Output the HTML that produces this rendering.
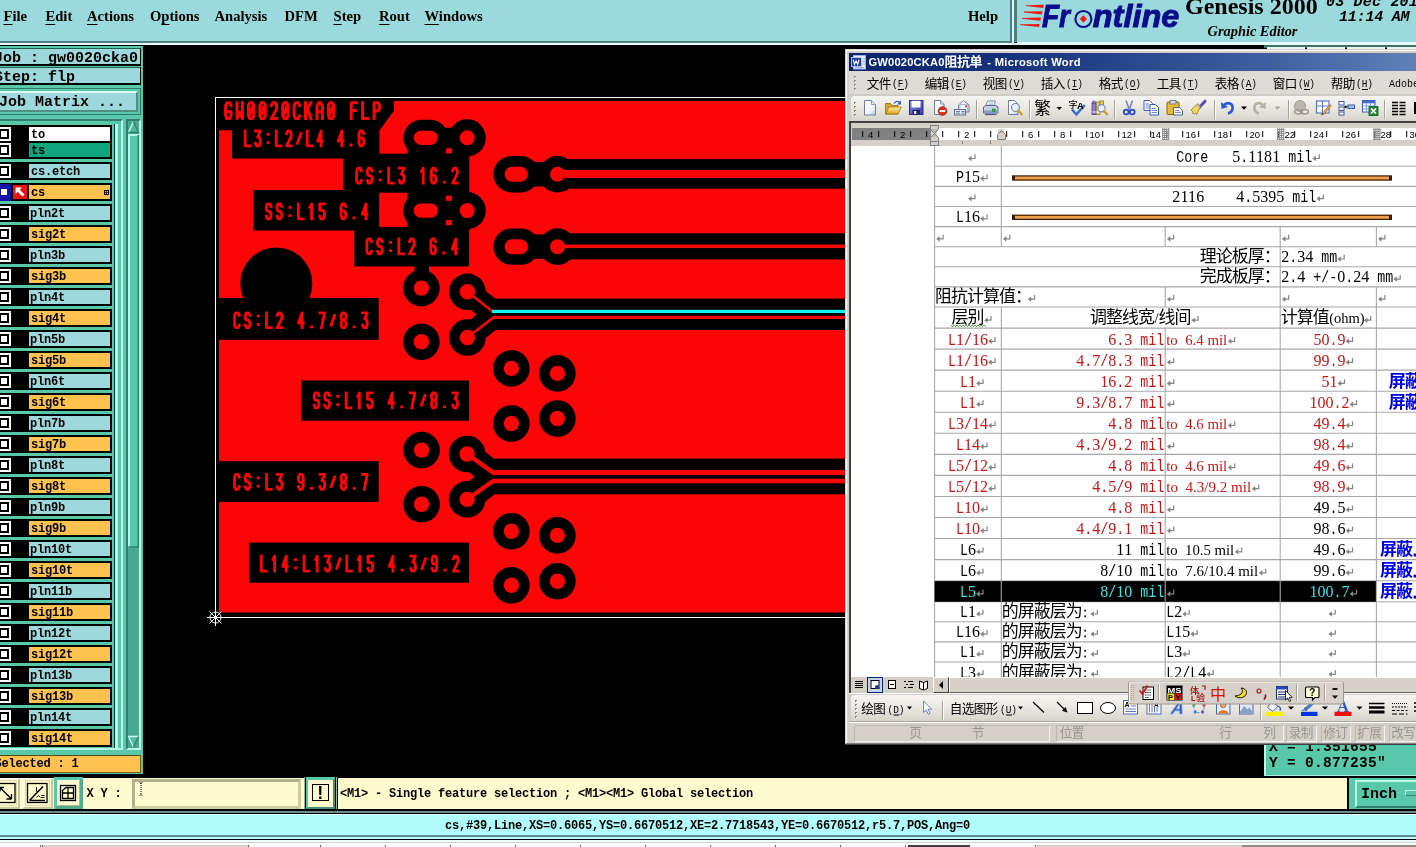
<!DOCTYPE html>
<html><head><meta charset="utf-8"><title>Genesis 2000 Graphic Editor</title>
<style>
html,body{margin:0;padding:0;}
body{width:1416px;height:847px;background:#000;position:relative;overflow:hidden;font-family:"Liberation Sans",sans-serif;}
div{position:absolute;box-sizing:border-box;}
.t{white-space:pre;}
svg{position:absolute;overflow:visible;}
</style></head><body>
<div id="root" style="left:0;top:0;width:1416px;height:847px;overflow:hidden;will-change:transform">
<div style="left:0px;top:0px;width:1010px;height:41px;background:#9bdadc;"></div>
<div style="left:0px;top:41px;width:1012px;height:2px;background:#4f7f7e;"></div>
<div style="left:0px;top:43px;width:1416px;height:2px;background:#e6fbfb;"></div>
<div style="left:1010px;top:0px;width:2px;height:43px;background:#4f7f7e;"></div>
<div style="left:1012px;top:0px;width:2px;height:45px;background:#d8f6f6;"></div>
<div style="left:1014px;top:0px;width:3px;height:42px;background:#4f7f7e;"></div>
<div style="left:1017px;top:0px;width:399px;height:42.3px;background:#9bdadc;"></div>
<div style="left:1017px;top:42.3px;width:399px;height:3px;background:#e6fbfb;"></div>
<div class="t" style="left:3.5px;top:7px;font:bold 14.6px/18px 'Liberation Serif',serif;color:#000;text-underline-offset:2.5px"><u>F</u>ile</div>
<div class="t" style="left:45.5px;top:7px;font:bold 14.6px/18px 'Liberation Serif',serif;color:#000;text-underline-offset:2.5px"><u>E</u>dit</div>
<div class="t" style="left:87px;top:7px;font:bold 14.6px/18px 'Liberation Serif',serif;color:#000;text-underline-offset:2.5px"><u>A</u>ctions</div>
<div class="t" style="left:150px;top:7px;font:bold 14.6px/18px 'Liberation Serif',serif;color:#000;text-underline-offset:2.5px">O<u>p</u>tions</div>
<div class="t" style="left:214.5px;top:7px;font:bold 14.6px/18px 'Liberation Serif',serif;color:#000;text-underline-offset:2.5px">Analysis</div>
<div class="t" style="left:284.5px;top:7px;font:bold 14.6px/18px 'Liberation Serif',serif;color:#000;text-underline-offset:2.5px">DFM</div>
<div class="t" style="left:333.5px;top:7px;font:bold 14.6px/18px 'Liberation Serif',serif;color:#000;text-underline-offset:2.5px"><u>S</u>tep</div>
<div class="t" style="left:379px;top:7px;font:bold 14.6px/18px 'Liberation Serif',serif;color:#000;text-underline-offset:2.5px"><u>R</u>out</div>
<div class="t" style="left:424.5px;top:7px;font:bold 14.6px/18px 'Liberation Serif',serif;color:#000;text-underline-offset:2.5px"><u>W</u>indows</div>
<div class="t" style="left:968px;top:7px;font:bold 14.6px/18px 'Liberation Serif',serif;color:#000;text-underline-offset:2.5px">Help</div>
<svg style="left:1017px;top:0" width="170" height="42" viewBox="0 0 170 42">
<g fill="#f01818">
<polygon points="9,5.2 27,4.8 26.3,8 9,6"/>
<polygon points="7,11.6 25.5,11.2 24.8,14.4 7,12.4"/>
<polygon points="5,18 24,17.6 23.3,20.8 5,18.8"/>
<polygon points="3,24.3 22.5,23.9 21.8,27.1 3,25.1"/>
</g>
<g style="font:italic bold 30.5px 'Liberation Sans',sans-serif" fill="#0c0c8c" stroke="#0c0c8c" stroke-width="0.9">
<text x="25" y="27.2" textLength="28" lengthAdjust="spacingAndGlyphs">Fr</text>
<text x="75.8" y="27.2" textLength="86.5" lengthAdjust="spacingAndGlyphs">ntline</text>
</g>
<circle cx="66.4" cy="19" r="8" fill="none" stroke="#0c0c8c" stroke-width="2.1"/>
<polygon points="66.4,15.2 70,19 66.4,22.8 62.800,19" fill="#f01818"/>
</svg>
<div class="t" style="left:1185px;top:-6.4px;font:bold 24px/24px 'Liberation Serif',sans-serif;color:#000;">Genesis 2000</div>
<div class="t" style="left:1207.5px;top:22px;font:italic bold 14.4px/18px 'Liberation Serif',serif;color:#000">Graphic Editor</div>
<div class="t" style="left:1326px;top:-5.2px;font:italic bold 15px/16px 'Liberation Mono',monospace;color:#000;letter-spacing:0.2px">03 Dec 2013</div>
<div class="t" style="left:1339px;top:10.4px;font:italic bold 15px/16px 'Liberation Mono',monospace;color:#000;letter-spacing:-0.2px">11:14 AM</div>
<div style="left:1264px;top:45px;width:152px;height:3px;background:#3d7466;"></div>
<div style="left:1267px;top:47px;width:38px;height:2px;background:#e8f4f0;"></div>
<div style="left:1307px;top:47px;width:38px;height:2px;background:#e8f4f0;"></div>
<div style="left:1347px;top:47px;width:38px;height:2px;background:#e8f4f0;"></div>
<div style="left:1387px;top:47px;width:38px;height:2px;background:#e8f4f0;"></div>
<div style="left:0px;top:45px;width:143px;height:732px;background:#58c8a8;"></div>
<div style="left:0px;top:45px;width:143px;height:1px;background:#000;"></div>
<div style="left:-2px;top:48px;width:143px;height:18px;background:#9dd9dc;border:1px solid #1f5f50;border-bottom:2px solid #000;border-right:1px solid #000"></div>
<div class="t" style="left:-6px;top:50.5px;font:bold 15px/16px 'Liberation Mono',sans-serif;color:#000;">Job : gw0020cka0</div>
<div style="left:-2px;top:67px;width:143px;height:18px;background:#9dd9dc;border:1px solid #1f5f50;border-bottom:2px solid #000;border-right:1px solid #000"></div>
<div class="t" style="left:-6px;top:69.5px;font:bold 15px/16px 'Liberation Mono',sans-serif;color:#000;">Step: flp</div>
<div style="left:-2px;top:88px;width:143px;height:27px;background:#58c8a8;border:1px solid #2c7a68"></div>
<div style="left:-2px;top:91px;width:140px;height:21px;background:#9dd9dc;border-top:2px solid #d8fbf6;border-left:2px solid #d8fbf6;border-bottom:2px solid #4f8f86;border-right:2px solid #4f8f86"></div>
<div class="t" style="left:-1px;top:95px;font:bold 15px/16px 'Liberation Mono',sans-serif;color:#000;">Job Matrix ...</div>
<div style="left:-2px;top:119px;width:125px;height:631px;background:#58c8a8;border-top:2px solid #2f7f6c;border-right:2px solid #b8f6e6;border-bottom:2px solid #b8f6e6"></div>
<div style="left:114.2px;top:124px;width:0.9px;height:624px;background:#103830;"></div>
<div style="left:115px;top:124px;width:3px;height:624px;background:#b8f6e6;"></div>
<div style="left:126px;top:119px;width:15px;height:631px;background:#4fb39a;border-left:2px solid #2f7f6c;border-top:2px solid #2f7f6c;border-right:2px solid #b8f6e6;border-bottom:2px solid #b8f6e6"></div>
<svg style="left:126px;top:119px" width="15" height="631"><rect x="2" y="2" width="11" height="627" fill="#48a891"/><polygon points="7.5,2.5 2.5,13.5 12.5,13.5" fill="#55b89e"/><polyline points="2.5,13.5 7.5,2.5" fill="none" stroke="#c8fff0" stroke-width="1.3"/><polyline points="7.5,2.5 12.5,13.5 2.5,13.5" fill="none" stroke="#2f7f6c" stroke-width="1.3"/><rect x="2" y="15" width="11" height="413.500" fill="#58c8a8"/><path d="M3,428.500V16H13" fill="none" stroke="#b8f6e6" stroke-width="2"/><path d="M12.250,16V428H2.500" fill="none" stroke="#2f7f6c" stroke-width="1.500"/><polygon points="7.5,628 2.5,617.5 12.5,617.5" fill="#55b89e"/><polyline points="7.5,628 2.5,617.5 12.5,617.5" fill="none" stroke="#c8fff0" stroke-width="1.3"/><polyline points="12.5,617.5 7.5,628" fill="none" stroke="#2f7f6c" stroke-width="1.3"/></svg>
<div style="left:0px;top:125px;width:112px;height:34px;background:#000;"></div>
<div style="left:29px;top:126.5px;width:81px;height:14.5px;background:#fff;"></div>
<div class="t" style="left:31px;top:128px;font:bold 12px/14px 'Liberation Mono',sans-serif;color:#000;letter-spacing:-0.2px">to</div>
<div style="left:29px;top:143px;width:81px;height:14px;background:#0fa57d;"></div>
<div class="t" style="left:31px;top:144px;font:bold 12px/14px 'Liberation Mono',sans-serif;color:#000;letter-spacing:-0.2px">ts</div>
<div style="left:-3px;top:127px;width:14px;height:14px;background:#fff;"></div>
<div style="left:-1px;top:129px;width:10px;height:10px;background:#000;"></div>
<div style="left:1px;top:131px;width:6px;height:6px;background:#fff;"></div>
<div style="left:-3px;top:143px;width:14px;height:14px;background:#fff;"></div>
<div style="left:-1px;top:145px;width:10px;height:10px;background:#000;"></div>
<div style="left:1px;top:147px;width:6px;height:6px;background:#fff;"></div>
<div style="left:0px;top:162px;width:112px;height:18px;background:#000;"></div>
<div style="left:29px;top:164px;width:81px;height:14px;background:#9dd9dc;"></div>
<div class="t" style="left:31px;top:165px;font:bold 12px/14px 'Liberation Mono',sans-serif;color:#000;letter-spacing:-0.2px">cs.etch</div>
<div style="left:-3px;top:164px;width:14px;height:14px;background:#fff;"></div>
<div style="left:-1px;top:166px;width:10px;height:10px;background:#000;"></div>
<div style="left:1px;top:168px;width:6px;height:6px;background:#fff;"></div>
<div style="left:0px;top:183px;width:112px;height:18px;background:#000;"></div>
<div style="left:29px;top:185px;width:81px;height:14px;background:#ffc24f;"></div>
<div class="t" style="left:31px;top:186px;font:bold 12px/14px 'Liberation Mono',sans-serif;color:#000;letter-spacing:-0.2px">cs</div>
<div style="left:0px;top:184px;width:11px;height:17px;background:#1414a0;"></div>
<div style="left:1px;top:189px;width:6px;height:6px;background:#fff;"></div>
<div style="left:13px;top:185px;width:14px;height:14px;background:#f01010;"></div>
<svg style="left:13px;top:185px" width="14" height="14"><polygon points="2.5,2.5 9,2.5 6.8,4.7 11.5,9.4 9.4,11.5 4.7,6.8 2.5,9" fill="#fff"/></svg>
<div style="left:0px;top:204px;width:112px;height:18px;background:#000;"></div>
<div style="left:29px;top:206px;width:81px;height:14px;background:#9dd9dc;"></div>
<div class="t" style="left:30px;top:207px;font:bold 12px/14px 'Liberation Mono',sans-serif;color:#000;letter-spacing:-0.2px">pln2t</div>
<div style="left:-3px;top:206px;width:14px;height:14px;background:#fff;"></div>
<div style="left:-1px;top:208px;width:10px;height:10px;background:#000;"></div>
<div style="left:1px;top:210px;width:6px;height:6px;background:#fff;"></div>
<div style="left:0px;top:225px;width:112px;height:18px;background:#000;"></div>
<div style="left:29px;top:227px;width:81px;height:14px;background:#ffc24f;"></div>
<div class="t" style="left:31px;top:228px;font:bold 12px/14px 'Liberation Mono',sans-serif;color:#000;letter-spacing:-0.2px">sig2t</div>
<div style="left:-3px;top:227px;width:14px;height:14px;background:#fff;"></div>
<div style="left:-1px;top:229px;width:10px;height:10px;background:#000;"></div>
<div style="left:1px;top:231px;width:6px;height:6px;background:#fff;"></div>
<div style="left:0px;top:246px;width:112px;height:18px;background:#000;"></div>
<div style="left:29px;top:248px;width:81px;height:14px;background:#9dd9dc;"></div>
<div class="t" style="left:30px;top:249px;font:bold 12px/14px 'Liberation Mono',sans-serif;color:#000;letter-spacing:-0.2px">pln3b</div>
<div style="left:-3px;top:248px;width:14px;height:14px;background:#fff;"></div>
<div style="left:-1px;top:250px;width:10px;height:10px;background:#000;"></div>
<div style="left:1px;top:252px;width:6px;height:6px;background:#fff;"></div>
<div style="left:0px;top:267px;width:112px;height:18px;background:#000;"></div>
<div style="left:29px;top:269px;width:81px;height:14px;background:#ffc24f;"></div>
<div class="t" style="left:31px;top:270px;font:bold 12px/14px 'Liberation Mono',sans-serif;color:#000;letter-spacing:-0.2px">sig3b</div>
<div style="left:-3px;top:269px;width:14px;height:14px;background:#fff;"></div>
<div style="left:-1px;top:271px;width:10px;height:10px;background:#000;"></div>
<div style="left:1px;top:273px;width:6px;height:6px;background:#fff;"></div>
<div style="left:0px;top:288px;width:112px;height:18px;background:#000;"></div>
<div style="left:29px;top:290px;width:81px;height:14px;background:#9dd9dc;"></div>
<div class="t" style="left:30px;top:291px;font:bold 12px/14px 'Liberation Mono',sans-serif;color:#000;letter-spacing:-0.2px">pln4t</div>
<div style="left:-3px;top:290px;width:14px;height:14px;background:#fff;"></div>
<div style="left:-1px;top:292px;width:10px;height:10px;background:#000;"></div>
<div style="left:1px;top:294px;width:6px;height:6px;background:#fff;"></div>
<div style="left:0px;top:309px;width:112px;height:18px;background:#000;"></div>
<div style="left:29px;top:311px;width:81px;height:14px;background:#ffc24f;"></div>
<div class="t" style="left:31px;top:312px;font:bold 12px/14px 'Liberation Mono',sans-serif;color:#000;letter-spacing:-0.2px">sig4t</div>
<div style="left:-3px;top:311px;width:14px;height:14px;background:#fff;"></div>
<div style="left:-1px;top:313px;width:10px;height:10px;background:#000;"></div>
<div style="left:1px;top:315px;width:6px;height:6px;background:#fff;"></div>
<div style="left:0px;top:330px;width:112px;height:18px;background:#000;"></div>
<div style="left:29px;top:332px;width:81px;height:14px;background:#9dd9dc;"></div>
<div class="t" style="left:30px;top:333px;font:bold 12px/14px 'Liberation Mono',sans-serif;color:#000;letter-spacing:-0.2px">pln5b</div>
<div style="left:-3px;top:332px;width:14px;height:14px;background:#fff;"></div>
<div style="left:-1px;top:334px;width:10px;height:10px;background:#000;"></div>
<div style="left:1px;top:336px;width:6px;height:6px;background:#fff;"></div>
<div style="left:0px;top:351px;width:112px;height:18px;background:#000;"></div>
<div style="left:29px;top:353px;width:81px;height:14px;background:#ffc24f;"></div>
<div class="t" style="left:31px;top:354px;font:bold 12px/14px 'Liberation Mono',sans-serif;color:#000;letter-spacing:-0.2px">sig5b</div>
<div style="left:-3px;top:353px;width:14px;height:14px;background:#fff;"></div>
<div style="left:-1px;top:355px;width:10px;height:10px;background:#000;"></div>
<div style="left:1px;top:357px;width:6px;height:6px;background:#fff;"></div>
<div style="left:0px;top:372px;width:112px;height:18px;background:#000;"></div>
<div style="left:29px;top:374px;width:81px;height:14px;background:#9dd9dc;"></div>
<div class="t" style="left:30px;top:375px;font:bold 12px/14px 'Liberation Mono',sans-serif;color:#000;letter-spacing:-0.2px">pln6t</div>
<div style="left:-3px;top:374px;width:14px;height:14px;background:#fff;"></div>
<div style="left:-1px;top:376px;width:10px;height:10px;background:#000;"></div>
<div style="left:1px;top:378px;width:6px;height:6px;background:#fff;"></div>
<div style="left:0px;top:393px;width:112px;height:18px;background:#000;"></div>
<div style="left:29px;top:395px;width:81px;height:14px;background:#ffc24f;"></div>
<div class="t" style="left:31px;top:396px;font:bold 12px/14px 'Liberation Mono',sans-serif;color:#000;letter-spacing:-0.2px">sig6t</div>
<div style="left:-3px;top:395px;width:14px;height:14px;background:#fff;"></div>
<div style="left:-1px;top:397px;width:10px;height:10px;background:#000;"></div>
<div style="left:1px;top:399px;width:6px;height:6px;background:#fff;"></div>
<div style="left:0px;top:414px;width:112px;height:18px;background:#000;"></div>
<div style="left:29px;top:416px;width:81px;height:14px;background:#9dd9dc;"></div>
<div class="t" style="left:30px;top:417px;font:bold 12px/14px 'Liberation Mono',sans-serif;color:#000;letter-spacing:-0.2px">pln7b</div>
<div style="left:-3px;top:416px;width:14px;height:14px;background:#fff;"></div>
<div style="left:-1px;top:418px;width:10px;height:10px;background:#000;"></div>
<div style="left:1px;top:420px;width:6px;height:6px;background:#fff;"></div>
<div style="left:0px;top:435px;width:112px;height:18px;background:#000;"></div>
<div style="left:29px;top:437px;width:81px;height:14px;background:#ffc24f;"></div>
<div class="t" style="left:31px;top:438px;font:bold 12px/14px 'Liberation Mono',sans-serif;color:#000;letter-spacing:-0.2px">sig7b</div>
<div style="left:-3px;top:437px;width:14px;height:14px;background:#fff;"></div>
<div style="left:-1px;top:439px;width:10px;height:10px;background:#000;"></div>
<div style="left:1px;top:441px;width:6px;height:6px;background:#fff;"></div>
<div style="left:0px;top:456px;width:112px;height:18px;background:#000;"></div>
<div style="left:29px;top:458px;width:81px;height:14px;background:#9dd9dc;"></div>
<div class="t" style="left:30px;top:459px;font:bold 12px/14px 'Liberation Mono',sans-serif;color:#000;letter-spacing:-0.2px">pln8t</div>
<div style="left:-3px;top:458px;width:14px;height:14px;background:#fff;"></div>
<div style="left:-1px;top:460px;width:10px;height:10px;background:#000;"></div>
<div style="left:1px;top:462px;width:6px;height:6px;background:#fff;"></div>
<div style="left:0px;top:477px;width:112px;height:18px;background:#000;"></div>
<div style="left:29px;top:479px;width:81px;height:14px;background:#ffc24f;"></div>
<div class="t" style="left:31px;top:480px;font:bold 12px/14px 'Liberation Mono',sans-serif;color:#000;letter-spacing:-0.2px">sig8t</div>
<div style="left:-3px;top:479px;width:14px;height:14px;background:#fff;"></div>
<div style="left:-1px;top:481px;width:10px;height:10px;background:#000;"></div>
<div style="left:1px;top:483px;width:6px;height:6px;background:#fff;"></div>
<div style="left:0px;top:498px;width:112px;height:18px;background:#000;"></div>
<div style="left:29px;top:500px;width:81px;height:14px;background:#9dd9dc;"></div>
<div class="t" style="left:30px;top:501px;font:bold 12px/14px 'Liberation Mono',sans-serif;color:#000;letter-spacing:-0.2px">pln9b</div>
<div style="left:-3px;top:500px;width:14px;height:14px;background:#fff;"></div>
<div style="left:-1px;top:502px;width:10px;height:10px;background:#000;"></div>
<div style="left:1px;top:504px;width:6px;height:6px;background:#fff;"></div>
<div style="left:0px;top:519px;width:112px;height:18px;background:#000;"></div>
<div style="left:29px;top:521px;width:81px;height:14px;background:#ffc24f;"></div>
<div class="t" style="left:31px;top:522px;font:bold 12px/14px 'Liberation Mono',sans-serif;color:#000;letter-spacing:-0.2px">sig9b</div>
<div style="left:-3px;top:521px;width:14px;height:14px;background:#fff;"></div>
<div style="left:-1px;top:523px;width:10px;height:10px;background:#000;"></div>
<div style="left:1px;top:525px;width:6px;height:6px;background:#fff;"></div>
<div style="left:0px;top:540px;width:112px;height:18px;background:#000;"></div>
<div style="left:29px;top:542px;width:81px;height:14px;background:#9dd9dc;"></div>
<div class="t" style="left:30px;top:543px;font:bold 12px/14px 'Liberation Mono',sans-serif;color:#000;letter-spacing:-0.2px">pln10t</div>
<div style="left:-3px;top:542px;width:14px;height:14px;background:#fff;"></div>
<div style="left:-1px;top:544px;width:10px;height:10px;background:#000;"></div>
<div style="left:1px;top:546px;width:6px;height:6px;background:#fff;"></div>
<div style="left:0px;top:561px;width:112px;height:18px;background:#000;"></div>
<div style="left:29px;top:563px;width:81px;height:14px;background:#ffc24f;"></div>
<div class="t" style="left:31px;top:564px;font:bold 12px/14px 'Liberation Mono',sans-serif;color:#000;letter-spacing:-0.2px">sig10t</div>
<div style="left:-3px;top:563px;width:14px;height:14px;background:#fff;"></div>
<div style="left:-1px;top:565px;width:10px;height:10px;background:#000;"></div>
<div style="left:1px;top:567px;width:6px;height:6px;background:#fff;"></div>
<div style="left:0px;top:582px;width:112px;height:18px;background:#000;"></div>
<div style="left:29px;top:584px;width:81px;height:14px;background:#9dd9dc;"></div>
<div class="t" style="left:30px;top:585px;font:bold 12px/14px 'Liberation Mono',sans-serif;color:#000;letter-spacing:-0.2px">pln11b</div>
<div style="left:-3px;top:584px;width:14px;height:14px;background:#fff;"></div>
<div style="left:-1px;top:586px;width:10px;height:10px;background:#000;"></div>
<div style="left:1px;top:588px;width:6px;height:6px;background:#fff;"></div>
<div style="left:0px;top:603px;width:112px;height:18px;background:#000;"></div>
<div style="left:29px;top:605px;width:81px;height:14px;background:#ffc24f;"></div>
<div class="t" style="left:31px;top:606px;font:bold 12px/14px 'Liberation Mono',sans-serif;color:#000;letter-spacing:-0.2px">sig11b</div>
<div style="left:-3px;top:605px;width:14px;height:14px;background:#fff;"></div>
<div style="left:-1px;top:607px;width:10px;height:10px;background:#000;"></div>
<div style="left:1px;top:609px;width:6px;height:6px;background:#fff;"></div>
<div style="left:0px;top:624px;width:112px;height:18px;background:#000;"></div>
<div style="left:29px;top:626px;width:81px;height:14px;background:#9dd9dc;"></div>
<div class="t" style="left:30px;top:627px;font:bold 12px/14px 'Liberation Mono',sans-serif;color:#000;letter-spacing:-0.2px">pln12t</div>
<div style="left:-3px;top:626px;width:14px;height:14px;background:#fff;"></div>
<div style="left:-1px;top:628px;width:10px;height:10px;background:#000;"></div>
<div style="left:1px;top:630px;width:6px;height:6px;background:#fff;"></div>
<div style="left:0px;top:645px;width:112px;height:18px;background:#000;"></div>
<div style="left:29px;top:647px;width:81px;height:14px;background:#ffc24f;"></div>
<div class="t" style="left:31px;top:648px;font:bold 12px/14px 'Liberation Mono',sans-serif;color:#000;letter-spacing:-0.2px">sig12t</div>
<div style="left:-3px;top:647px;width:14px;height:14px;background:#fff;"></div>
<div style="left:-1px;top:649px;width:10px;height:10px;background:#000;"></div>
<div style="left:1px;top:651px;width:6px;height:6px;background:#fff;"></div>
<div style="left:0px;top:666px;width:112px;height:18px;background:#000;"></div>
<div style="left:29px;top:668px;width:81px;height:14px;background:#9dd9dc;"></div>
<div class="t" style="left:30px;top:669px;font:bold 12px/14px 'Liberation Mono',sans-serif;color:#000;letter-spacing:-0.2px">pln13b</div>
<div style="left:-3px;top:668px;width:14px;height:14px;background:#fff;"></div>
<div style="left:-1px;top:670px;width:10px;height:10px;background:#000;"></div>
<div style="left:1px;top:672px;width:6px;height:6px;background:#fff;"></div>
<div style="left:0px;top:687px;width:112px;height:18px;background:#000;"></div>
<div style="left:29px;top:689px;width:81px;height:14px;background:#ffc24f;"></div>
<div class="t" style="left:31px;top:690px;font:bold 12px/14px 'Liberation Mono',sans-serif;color:#000;letter-spacing:-0.2px">sig13b</div>
<div style="left:-3px;top:689px;width:14px;height:14px;background:#fff;"></div>
<div style="left:-1px;top:691px;width:10px;height:10px;background:#000;"></div>
<div style="left:1px;top:693px;width:6px;height:6px;background:#fff;"></div>
<div style="left:0px;top:708px;width:112px;height:18px;background:#000;"></div>
<div style="left:29px;top:710px;width:81px;height:14px;background:#9dd9dc;"></div>
<div class="t" style="left:30px;top:711px;font:bold 12px/14px 'Liberation Mono',sans-serif;color:#000;letter-spacing:-0.2px">pln14t</div>
<div style="left:-3px;top:710px;width:14px;height:14px;background:#fff;"></div>
<div style="left:-1px;top:712px;width:10px;height:10px;background:#000;"></div>
<div style="left:1px;top:714px;width:6px;height:6px;background:#fff;"></div>
<div style="left:0px;top:729px;width:112px;height:18px;background:#000;"></div>
<div style="left:29px;top:731px;width:81px;height:14px;background:#ffc24f;"></div>
<div class="t" style="left:31px;top:732px;font:bold 12px/14px 'Liberation Mono',sans-serif;color:#000;letter-spacing:-0.2px">sig14t</div>
<div style="left:-3px;top:731px;width:14px;height:14px;background:#fff;"></div>
<div style="left:-1px;top:733px;width:10px;height:10px;background:#000;"></div>
<div style="left:1px;top:735px;width:6px;height:6px;background:#fff;"></div>
<svg style="left:104px;top:190px" width="6" height="6"><rect x="0" y="0" width="5" height="5" fill="#000"/><rect x="1" y="1" width="1.2" height="1.2" fill="#ffc24f"/><rect x="2.900" y="1" width="1.2" height="1.2" fill="#ffc24f"/><rect x="1" y="2.900" width="1.2" height="1.2" fill="#ffc24f"/><rect x="2.900" y="2.900" width="1.2" height="1.2" fill="#ffc24f"/></svg>
<div style="left:-2px;top:754.5px;width:143px;height:18px;background:#ffc24f;border:1px solid #7a5a10;border-top-color:#5a4a20"></div>
<div class="t" style="left:-5.5px;top:756px;font:bold 12px/16px 'Liberation Mono',sans-serif;color:#000;letter-spacing:-0.2px">Selected : 1</div>
<div style="left:0px;top:777.5px;width:1416px;height:32px;background:#fffbce;"></div>
<div style="left:0px;top:774px;width:143px;height:3px;background:#000;"></div>
<div style="left:-3px;top:777.5px;width:23px;height:31px;background:#fffbce;border:2px solid #fffde8;border-bottom-color:#c8c49c;border-right-color:#c8c49c"></div>
<div style="left:-3px;top:780px;width:20px;height:26px;background:#fffbce;border:1px solid #dedab4"></div>
<div style="left:22px;top:777.5px;width:30.5px;height:31px;background:#fffbce;border:2px solid #fffde8;border-bottom-color:#c8c49c;border-right-color:#c8c49c"></div>
<div style="left:24.5px;top:780px;width:25.5px;height:26px;background:#fffbce;border:1px solid #dedab4"></div>
<div style="left:54px;top:777px;width:28.5px;height:32px;background:#fffbce;border:3px solid #58c8a8;border-bottom-color:#4fae94;border-right-color:#4fae94"></div>
<div style="left:57px;top:780px;width:22.5px;height:26px;background:#fffbce;border:1.5px solid #fffde8;border-bottom-color:#b8b48c;border-right-color:#b8b48c"></div>
<svg style="left:0;top:777px" width="90" height="34" fill="none" stroke="#000" stroke-width="1.3">
<rect x="-4" y="6.500" width="19" height="19"/><path d="M0.500,11L11,21.500M11.500,22V17M11.500,22H6.500M0,10.500h4M0,10.500v4"/>
<rect x="27.500" y="6.500" width="19.500" height="19"/><path d="M29.500,23.500H45M29.500,23.500L43,9.500" stroke-width="1.500"/><path d="M36.500,10v4.500h2.500M36.500,20.500l2,-2 2,2M41,18.500h3.500M41,20.500h3.500" stroke-width="0.900"/>
<rect x="60.500" y="8.500" width="15" height="15"/><path d="M62.500,21.500V13.500L66,10.500H73.500V21.500ZM62.500,16H73.500M68,10.500V21.500"/>
</svg>
<div class="t" style="left:86.5px;top:786px;font:bold 12px/16px 'Liberation Mono',sans-serif;color:#000;letter-spacing:-0.2px">X Y :</div>
<div style="left:132px;top:778.5px;width:169px;height:30px;background:#fffbce;border:3px solid #cfcba2;border-top-color:#b4b08a;border-left-color:#b4b08a"></div>
<svg style="left:138px;top:781px" width="6" height="18"><path d="M3 2V14" stroke="#000" stroke-dasharray="1 1"/><path d="M1.5 1l1.5 1.5L4.5 1M1.5 15l1.5-1.5L4.5 15" stroke="#000" fill="none" stroke-width="0.8"/></svg>
<div style="left:305px;top:777px;width:31px;height:33px;background:#fffbce;border:3px solid #58c8a8;border-bottom-color:#3f8f7c;border-right-color:#3f8f7c"></div>
<div style="left:312px;top:784.4px;width:16.5px;height:16.5px;background:#fffbce;border:1.500px solid #000"></div>
<div class="t" style="left:317.3px;top:783.5px;font:bold 18px/18px 'Liberation Sans',sans-serif;color:#000;">!</div>
<div style="left:303.6px;top:777px;width:0.9px;height:32px;background:#9ab8a0;"></div>
<div style="left:304.5px;top:777px;width:0.8px;height:32px;background:#000;"></div>
<div style="left:335px;top:777px;width:0.8px;height:32px;background:#000;"></div>
<div style="left:335.8px;top:777px;width:0.9px;height:32px;background:#9ab8a0;"></div>
<div style="left:336.7px;top:777px;width:0.6px;height:32px;background:#000;"></div>
<div class="t" style="left:340px;top:786px;font:bold 12px/16px 'Liberation Mono',sans-serif;color:#000;letter-spacing:-0.2px">&lt;M1&gt; - Single feature selection ; &lt;M1&gt;&lt;M1&gt; Global selection</div>
<div style="left:1347px;top:777px;width:69px;height:33px;background:#58c8a8;border-left:2.200px solid #000"></div>
<div style="left:1355px;top:780px;width:70px;height:28px;background:#58c8a8;border:2px solid #b8f6e6;border-bottom-color:#2f7f6c;border-right-color:#2f7f6c"></div>
<div class="t" style="left:1361px;top:787px;font:bold 15px/16px 'Liberation Mono',sans-serif;color:#000;">Inch</div>
<div style="left:1405px;top:790px;width:14px;height:6px;background:#58c8a8;border:1.5px solid #b8f6e6;border-bottom-color:#2f7f6c"></div>
<div style="left:0px;top:809.1px;width:1416px;height:1.8px;background:#000;"></div>
<div style="left:0px;top:810.9px;width:1416px;height:2.1px;background:#6e8a8c;"></div>
<div style="left:0px;top:813px;width:1416px;height:0.9px;background:#000;"></div>
<div style="left:0px;top:813.7px;width:1416px;height:21px;background:#b0fcfc;"></div>
<div style="left:0px;top:813.7px;width:1416px;height:1.6px;background:#dcffff;"></div>
<div style="left:0px;top:834.7px;width:1416px;height:2.2px;background:#5a908c;"></div>
<div style="left:0px;top:836.9px;width:1416px;height:1.9px;background:#b8ffff;"></div>
<div style="left:0px;top:838.8px;width:1416px;height:1.2px;background:#000;"></div>
<div style="left:0px;top:840px;width:1416px;height:2px;background:#eefefe;"></div>
<div style="left:0px;top:842px;width:1416px;height:1.4px;background:#d8d4cc;"></div>
<div style="left:0px;top:843.4px;width:1416px;height:3.6px;background:#fff;"></div>
<div style="left:43px;top:845px;width:206px;height:2px;background:#d4d0c8;"></div>
<div style="left:1037px;top:845px;width:205px;height:2px;background:#d4d0c8;"></div>
<div style="left:1242px;top:845px;width:174px;height:2px;background:#8c8a84;"></div>
<div style="left:40px;top:844.5px;width:1px;height:2.5px;background:#606060;"></div>
<div style="left:42px;top:844.5px;width:1px;height:2.5px;background:#606060;"></div>
<div style="left:248px;top:844.5px;width:1px;height:2.5px;background:#606060;"></div>
<div style="left:320px;top:844.5px;width:1px;height:2.5px;background:#606060;"></div>
<div style="left:385px;top:844.5px;width:1px;height:2.5px;background:#606060;"></div>
<div style="left:450px;top:844.5px;width:1px;height:2.5px;background:#606060;"></div>
<div style="left:515px;top:844.5px;width:1px;height:2.5px;background:#606060;"></div>
<div style="left:580px;top:844.5px;width:1px;height:2.5px;background:#606060;"></div>
<div style="left:645px;top:844.5px;width:1px;height:2.5px;background:#606060;"></div>
<div style="left:710px;top:844.5px;width:1px;height:2.5px;background:#606060;"></div>
<div style="left:775px;top:844.5px;width:1px;height:2.5px;background:#606060;"></div>
<div style="left:840px;top:844.5px;width:1px;height:2.5px;background:#606060;"></div>
<div style="left:905px;top:844.5px;width:1px;height:2.5px;background:#606060;"></div>
<div style="left:1035px;top:844.5px;width:1px;height:2.5px;background:#606060;"></div>
<div style="left:908px;top:845px;width:62px;height:2px;background:#404040;"></div>
<div class="t" style="left:445px;top:818px;font:bold 12px/16px 'Liberation Mono',sans-serif;color:#000;letter-spacing:-0.2px">cs,#39,Line,XS=0.6065,YS=0.6670512,XE=2.7718543,YE=0.6670512,r5.7,POS,Ang=0</div>
<div style="left:1264px;top:745px;width:152px;height:30.5px;background:#58c8a8;border-left:2px solid #b8f6e6;border-bottom:1.600px solid #a8f0dc"></div>
<div style="left:1264px;top:775.5px;width:152px;height:2.3px;background:#000;"></div>
<div class="t" style="left:1269px;top:739px;font:bold 14.5px/16px 'Liberation Mono',sans-serif;color:#000;letter-spacing:0.3px">X = 1.351655</div>
<div class="t" style="left:1269px;top:755px;font:bold 14.5px/16px 'Liberation Mono',sans-serif;color:#000;letter-spacing:0.3px">Y = 0.877235"</div>
<svg style="left:0;top:0" width="845" height="640" viewBox="0 0 845 640" shape-rendering="auto"><rect x="215.5" y="97.5" width="700" height="520" fill="none" stroke="#fff" stroke-width="1"/><rect x="219" y="101" width="700" height="511.5" fill="#fa0606"/><g fill="#000"><polygon points="219,101 394,101 394,110.7 379.4,130.5 379.4,158.5 232,158.5 232,130.3 219,130.3"/><rect x="343" y="153.7" width="126" height="39"/><rect x="253.5" y="190" width="126" height="40.5"/><rect x="354.3" y="226.8" width="114.7" height="39.6"/><rect x="407.3" y="150" width="62" height="80"/><rect x="426" y="138" width="41" height="17"/><rect x="403.40000000000003" y="119.80000000000001" width="44.8" height="36" rx="18.0"/><circle cx="467.2" cy="137.8" r="18.6"/><rect x="403.40000000000003" y="192.6" width="44.8" height="36" rx="18.0"/><circle cx="467.2" cy="210.6" r="18.6"/><rect x="493.4" y="156.0" width="45.8" height="36.4" rx="18.2"/><circle cx="557.5" cy="174.2" r="18.3"/><rect x="493.4" y="228.4" width="45.8" height="36.4" rx="18.2"/><circle cx="557.5" cy="246.6" r="18.3"/><rect x="516" y="162.0" width="41" height="24.4"/><rect x="516" y="234.4" width="41" height="24.4"/><rect x="426" y="127.80000000000001" width="41" height="20"/><rect x="426" y="200.6" width="41" height="20"/><rect x="557.5" y="159.1" width="300" height="29.6"/><rect x="557.5" y="233.3" width="300" height="26.1"/><circle cx="276.3" cy="283.4" r="36"/><rect x="219" y="298" width="159.7" height="41.8"/><rect x="301.2" y="380.5" width="167.8" height="40.2"/><rect x="219" y="461.2" width="159.7" height="40.7"/><rect x="249" y="542.6" width="220" height="40.1"/><rect x="414.5" y="264" width="14.5" height="14"/><circle cx="421.4" cy="288.1" r="18.3"/><circle cx="421.4" cy="341.8" r="18.3"/><circle cx="467.4" cy="291.8" r="18.3"/><circle cx="467.4" cy="337.5" r="18.3"/><circle cx="511.4" cy="368.4" r="18.3"/><circle cx="557.4" cy="373.4" r="18.3"/><circle cx="511.4" cy="423.5" r="18.3"/><circle cx="557.4" cy="418.5" r="18.3"/><circle cx="421.6" cy="450.1" r="18.3"/><circle cx="421.6" cy="504.2" r="18.3"/><circle cx="467.1" cy="454" r="18.3"/><circle cx="467.1" cy="499.4" r="18.3"/><circle cx="511.4" cy="531.2" r="18.3"/><circle cx="557.4" cy="535.4" r="18.3"/><circle cx="511.4" cy="585.3" r="18.3"/><circle cx="557.4" cy="581.2" r="18.3"/></g><g fill="none" stroke="#000" stroke-linecap="round" stroke-linejoin="round"><path d="M467.4,291.8 L489,309 L500,314.3 L489,320 L467.4,337.5" stroke-width="24"/><path d="M467.1,454 L489,471.5 L500,476.5 L489,482 L467.1,499.4" stroke-width="26"/></g><rect x="492" y="298.7" width="400" height="31.3" fill="#000"/><polygon points="480,298.7 494,298.7 494,330 480,330 486,314" fill="#000"/><rect x="492" y="458.7" width="400" height="35.6" fill="#000"/><polygon points="480,458.7 494,458.7 494,494.3 480,494.3 486,476" fill="#000"/><g fill="#fa0606"><rect x="413.65000000000003" y="130.65" width="24.3" height="14.3" rx="7.15"/><circle cx="467.2" cy="137.8" r="7.5"/><rect x="413.65000000000003" y="203.45" width="24.3" height="14.3" rx="7.15"/><circle cx="467.2" cy="210.6" r="7.5"/><rect x="504.59999999999997" y="166.8" width="23.4" height="15" rx="7.5"/><circle cx="557.5" cy="174.3" r="7.5"/><rect x="504.59999999999997" y="239.3" width="23.4" height="15" rx="7.5"/><circle cx="557.5" cy="246.8" r="7.5"/><circle cx="421.4" cy="288.1" r="7.7"/><circle cx="421.4" cy="341.8" r="7.7"/><circle cx="467.4" cy="291.8" r="7.7"/><circle cx="467.4" cy="337.5" r="7.7"/><circle cx="511.4" cy="368.4" r="7.7"/><circle cx="557.4" cy="373.4" r="7.7"/><circle cx="511.4" cy="423.5" r="7.7"/><circle cx="557.4" cy="418.5" r="7.7"/><circle cx="421.6" cy="450.1" r="7.7"/><circle cx="421.6" cy="504.2" r="7.7"/><circle cx="467.1" cy="454" r="7.7"/><circle cx="467.1" cy="499.4" r="7.7"/><circle cx="511.4" cy="531.2" r="7.7"/><circle cx="557.4" cy="535.4" r="7.7"/><circle cx="511.4" cy="585.3" r="7.7"/><circle cx="557.4" cy="581.2" r="7.7"/><rect x="445.9" y="148.3" width="6.1" height="5.2"/><rect x="445.9" y="195.6" width="6.1" height="5.2"/><rect x="445.9" y="220.1" width="6.1" height="5.2"/><rect x="379.3" y="193.6" width="24" height="33"/><rect x="557.5" y="169.9" width="300" height="8.1"/><rect x="557.5" y="244.5" width="300" height="3.6"/><rect x="493" y="315.8" width="400" height="3.2"/><rect x="492.5" y="469.9" width="400" height="5.2"/><rect x="492.5" y="478.7" width="400" height="4.6"/></g><g fill="none" stroke="#fa0606" stroke-linecap="round"><path d="M467.4,291.8 L492.5,311.4" stroke-width="2.6"/><path d="M467.4,337.5 L493.5,317.4" stroke-width="2.6"/><path d="M467.1,454 L493,472.5" stroke-width="4.6"/><path d="M467.1,499.4 L493,481" stroke-width="4.2"/></g><g fill="#000"><rect x="403.40000000000003" y="192.6" width="44.8" height="36" rx="18.0"/></g><g fill="#fa0606"><rect x="413.65000000000003" y="203.45" width="24.3" height="14.3" rx="7.15"/></g><rect x="492" y="309.8" width="400" height="3.3" fill="#19f0f0"/><path d="M231.0,105.5 L229.7,102.8 L226.9,102.8 L225.6,105.5 L225.6,115.9 L226.9,118.6 L229.7,118.6 L231.0,115.9 L231.0,111.4 L228.6,111.4 M237.0,102.8 L237.0,118.6 L239.7,112.3 L242.4,118.6 L242.4,102.8 M249.8,102.8 L252.5,102.8 L253.8,105.5 L253.8,115.9 L252.5,118.6 L249.8,118.6 L248.4,115.9 L248.4,105.5 Z M250.1,114.1 L252.2,107.3 M261.2,102.8 L263.9,102.8 L265.3,105.5 L265.3,115.9 L263.9,118.6 L261.2,118.6 L259.9,115.9 L259.9,105.5 Z M261.5,114.1 L263.6,107.3 M271.3,105.5 L272.6,102.8 L275.3,102.8 L276.7,105.5 L276.7,108.7 L271.3,118.6 L276.7,118.6 M284.1,102.8 L286.8,102.8 L288.1,105.5 L288.1,115.9 L286.8,118.6 L284.1,118.6 L282.7,115.9 L282.7,105.5 Z M284.3,114.1 L286.5,107.3 M299.5,105.5 L298.2,102.8 L295.5,102.8 L294.1,105.5 L294.1,115.9 L295.5,118.6 L298.2,118.6 L299.5,115.9 M305.5,102.8 L305.5,118.6 M310.9,102.8 L305.5,112.3 M307.7,109.1 L310.9,118.6 M317.0,118.6 L317.0,106.0 L318.6,102.8 L320.7,102.8 L322.4,106.0 L322.4,118.6 M317.0,111.8 L322.4,111.8 M329.7,102.8 L332.4,102.8 L333.8,105.5 L333.8,115.9 L332.4,118.6 L329.7,118.6 L328.4,115.9 L328.4,105.5 Z M330.0,114.1 L332.2,107.3 M356.6,102.8 L351.2,102.8 L351.2,118.6 M351.2,110.5 L355.3,110.5 M362.6,102.8 L362.6,118.6 L368.0,118.6 M374.1,118.6 L374.1,102.8 L378.1,102.8 L379.5,105.1 L379.5,108.7 L378.1,110.9 L374.1,110.9" fill="none" stroke="#fa0606" stroke-width="3.0" stroke-linecap="square" stroke-linejoin="round"/><path d="M245.1,131.0 L245.1,145.9 L249.8,145.9 M255.5,131.0 L260.2,131.0 L257.6,137.2 L259.0,137.2 L260.2,139.5 L260.2,143.3 L259.0,145.9 L256.6,145.9 L255.5,143.3 M268.0,134.4 L268.3,134.4 M268.0,142.7 L268.3,142.7 M276.2,131.0 L276.2,145.9 L280.9,145.9 M286.5,133.6 L287.7,131.0 L290.0,131.0 L291.2,133.6 L291.2,136.5 L286.5,145.9 L291.2,145.9 M297.4,143.3 L301.0,133.6 M307.2,131.0 L307.2,145.9 L311.9,145.9 M321.1,145.9 L321.1,131.0 L317.6,141.2 L322.2,141.2 M341.8,145.9 L341.8,131.0 L338.2,141.2 L342.9,141.2 M350.8,145.0 L351.1,145.0 M363.7,133.6 L362.5,131.0 L360.1,131.0 L359.0,133.6 L359.0,143.3 L360.1,145.9 L362.5,145.9 L363.7,143.3 L363.7,140.4 L362.5,138.0 L359.0,138.0" fill="none" stroke="#fa0606" stroke-width="2.8" stroke-linecap="square" stroke-linejoin="round"/><path d="M361.3,170.8 L360.1,168.2 L357.8,168.2 L356.6,170.8 L356.6,180.5 L357.8,183.1 L360.1,183.1 L361.3,180.5 M372.0,170.8 L370.8,168.2 L368.4,168.2 L367.3,170.8 L367.3,173.3 L368.4,175.6 L370.8,175.6 L372.0,178.0 L372.0,180.5 L370.8,183.1 L368.4,183.1 L367.3,180.5 M380.2,171.6 L380.4,171.6 M380.2,179.9 L380.4,179.9 M388.6,168.2 L388.6,183.1 L393.3,183.1 M399.3,168.2 L404.0,168.2 L401.4,174.4 L402.8,174.4 L404.0,176.7 L404.0,180.5 L402.8,183.1 L400.5,183.1 L399.3,180.5 M421.6,171.6 L423.2,168.2 L423.2,183.1 M436.0,170.8 L434.8,168.2 L432.5,168.2 L431.3,170.8 L431.3,180.5 L432.5,183.1 L434.8,183.1 L436.0,180.5 L436.0,177.6 L434.8,175.2 L431.3,175.2 M444.2,182.2 L444.4,182.2 M452.6,170.8 L453.8,168.2 L456.2,168.2 L457.3,170.8 L457.3,173.7 L452.6,183.1 L457.3,183.1" fill="none" stroke="#fa0606" stroke-width="2.8" stroke-linecap="square" stroke-linejoin="round"/><path d="M271.0,206.5 L269.8,203.9 L267.5,203.9 L266.3,206.5 L266.3,209.0 L267.5,211.3 L269.8,211.3 L271.0,213.7 L271.0,216.2 L269.8,218.8 L267.5,218.8 L266.3,216.2 M281.7,206.5 L280.5,203.9 L278.1,203.9 L277.0,206.5 L277.0,209.0 L278.1,211.3 L280.5,211.3 L281.7,213.7 L281.7,216.2 L280.5,218.8 L278.1,218.8 L277.0,216.2 M289.9,207.3 L290.1,207.3 M289.9,215.6 L290.1,215.6 M298.3,203.9 L298.3,218.8 L303.0,218.8 M309.9,207.3 L311.6,203.9 L311.6,218.8 M324.4,203.9 L319.7,203.9 L319.7,210.3 L323.2,210.3 L324.4,212.6 L324.4,216.2 L323.2,218.8 L320.8,218.8 L319.7,216.2 M345.7,206.5 L344.5,203.9 L342.2,203.9 L341.0,206.5 L341.0,216.2 L342.2,218.8 L344.5,218.8 L345.7,216.2 L345.7,213.3 L344.5,210.9 L341.0,210.9 M353.9,217.9 L354.1,217.9 M365.9,218.8 L365.9,203.9 L362.3,214.1 L367.0,214.1" fill="none" stroke="#fa0606" stroke-width="2.8" stroke-linecap="square" stroke-linejoin="round"/><path d="M371.5,241.6 L370.3,239.0 L368.0,239.0 L366.8,241.6 L366.8,251.3 L368.0,253.9 L370.3,253.9 L371.5,251.3 M382.2,241.6 L381.0,239.0 L378.6,239.0 L377.5,241.6 L377.5,244.1 L378.6,246.4 L381.0,246.4 L382.2,248.8 L382.2,251.3 L381.0,253.9 L378.6,253.9 L377.5,251.3 M390.4,242.4 L390.6,242.4 M390.4,250.7 L390.6,250.7 M398.8,239.0 L398.8,253.9 L403.5,253.9 M409.5,241.6 L410.7,239.0 L413.0,239.0 L414.2,241.6 L414.2,244.5 L409.5,253.9 L414.2,253.9 M435.5,241.6 L434.3,239.0 L432.0,239.0 L430.8,241.6 L430.8,251.3 L432.0,253.9 L434.3,253.9 L435.5,251.3 L435.5,248.4 L434.3,246.0 L430.8,246.0 M443.7,253.0 L444.0,253.0 M455.7,253.9 L455.7,239.0 L452.2,249.2 L456.9,249.2" fill="none" stroke="#fa0606" stroke-width="2.8" stroke-linecap="square" stroke-linejoin="round"/><path d="M239.2,315.4 L238.0,312.8 L235.7,312.8 L234.5,315.4 L234.5,325.1 L235.7,327.7 L238.0,327.7 L239.2,325.1 M249.9,315.4 L248.7,312.8 L246.3,312.8 L245.2,315.4 L245.2,317.9 L246.3,320.2 L248.7,320.2 L249.9,322.6 L249.9,325.1 L248.7,327.7 L246.3,327.7 L245.2,325.1 M258.1,316.2 L258.3,316.2 M258.1,324.5 L258.3,324.5 M266.5,312.8 L266.5,327.7 L271.2,327.7 M277.2,315.4 L278.4,312.8 L280.7,312.8 L281.9,315.4 L281.9,318.3 L277.2,327.7 L281.9,327.7 M302.0,327.7 L302.0,312.8 L298.5,323.0 L303.2,323.0 M311.4,326.8 L311.7,326.8 M319.9,312.8 L324.6,312.8 L321.5,327.7 M331.1,325.1 L334.6,315.4 M342.4,312.8 L344.7,312.8 L345.9,314.9 L345.9,318.1 L344.7,320.2 L345.9,322.4 L345.9,325.6 L344.7,327.7 L342.4,327.7 L341.2,325.6 L341.2,322.4 L342.4,320.2 L341.2,318.1 L341.2,314.9 Z M342.4,320.2 L344.7,320.2 M354.1,326.8 L354.3,326.8 M362.5,312.8 L367.2,312.8 L364.7,319.0 L366.1,319.0 L367.2,321.3 L367.2,325.1 L366.1,327.7 L363.7,327.7 L362.5,325.1" fill="none" stroke="#fa0606" stroke-width="2.8" stroke-linecap="square" stroke-linejoin="round"/><path d="M318.8,395.5 L317.6,392.9 L315.3,392.9 L314.1,395.5 L314.1,398.0 L315.3,400.3 L317.6,400.3 L318.8,402.7 L318.8,405.2 L317.6,407.8 L315.3,407.8 L314.1,405.2 M329.5,395.5 L328.3,392.9 L325.9,392.9 L324.8,395.5 L324.8,398.0 L325.9,400.3 L328.3,400.3 L329.5,402.7 L329.5,405.2 L328.3,407.8 L325.9,407.8 L324.8,405.2 M337.7,396.3 L337.9,396.3 M337.7,404.6 L337.9,404.6 M346.1,392.9 L346.1,407.8 L350.8,407.8 M357.7,396.3 L359.4,392.9 L359.4,407.8 M372.2,392.9 L367.5,392.9 L367.5,399.3 L371.0,399.3 L372.2,401.6 L372.2,405.2 L371.0,407.8 L368.6,407.8 L367.5,405.2 M392.3,407.8 L392.3,392.9 L388.8,403.1 L393.5,403.1 M401.7,406.9 L401.9,406.9 M410.1,392.9 L414.8,392.9 L411.8,407.8 M421.4,405.2 L424.9,395.5 M432.6,392.9 L435.0,392.9 L436.2,395.0 L436.2,398.2 L435.0,400.3 L436.2,402.5 L436.2,405.7 L435.0,407.8 L432.6,407.8 L431.5,405.7 L431.5,402.5 L432.6,400.3 L431.5,398.2 L431.5,395.0 Z M432.6,400.3 L435.0,400.3 M444.4,406.9 L444.6,406.9 M452.8,392.9 L457.5,392.9 L454.9,399.1 L456.3,399.1 L457.5,401.4 L457.5,405.2 L456.3,407.8 L454.0,407.8 L452.8,405.2" fill="none" stroke="#fa0606" stroke-width="2.8" stroke-linecap="square" stroke-linejoin="round"/><path d="M239.2,477.0 L238.0,474.4 L235.7,474.4 L234.5,477.0 L234.5,486.7 L235.7,489.3 L238.0,489.3 L239.2,486.7 M249.9,477.0 L248.7,474.4 L246.3,474.4 L245.2,477.0 L245.2,479.5 L246.3,481.8 L248.7,481.8 L249.9,484.2 L249.9,486.7 L248.7,489.3 L246.3,489.3 L245.2,486.7 M258.1,477.8 L258.3,477.8 M258.1,486.1 L258.3,486.1 M266.5,474.4 L266.5,489.3 L271.2,489.3 M277.2,474.4 L281.9,474.4 L279.3,480.6 L280.7,480.6 L281.9,482.9 L281.9,486.7 L280.7,489.3 L278.4,489.3 L277.2,486.7 M303.2,482.3 L299.7,482.3 L298.5,479.9 L298.5,477.0 L299.7,474.4 L302.0,474.4 L303.2,477.0 L303.2,486.7 L302.0,489.3 L299.7,489.3 L298.5,486.7 M311.4,488.4 L311.7,488.4 M319.9,474.4 L324.6,474.4 L322.0,480.6 L323.4,480.6 L324.6,482.9 L324.6,486.7 L323.4,489.3 L321.0,489.3 L319.9,486.7 M331.1,486.7 L334.6,477.0 M342.4,474.4 L344.7,474.4 L345.9,476.5 L345.9,479.7 L344.7,481.8 L345.9,484.0 L345.9,487.2 L344.7,489.3 L342.4,489.3 L341.2,487.2 L341.2,484.0 L342.4,481.8 L341.2,479.7 L341.2,476.5 Z M342.4,481.8 L344.7,481.8 M354.1,488.4 L354.3,488.4 M362.5,474.4 L367.2,474.4 L364.2,489.3" fill="none" stroke="#fa0606" stroke-width="2.8" stroke-linecap="square" stroke-linejoin="round"/><path d="M261.3,556.2 L261.3,571.1 L266.0,571.1 M272.9,559.6 L274.6,556.2 L274.6,571.1 M286.2,571.1 L286.2,556.2 L282.6,566.4 L287.3,566.4 M295.5,559.6 L295.8,559.6 M295.5,567.9 L295.8,567.9 M304.0,556.2 L304.0,571.1 L308.7,571.1 M315.6,559.6 L317.2,556.2 L317.2,571.1 M325.3,556.2 L330.0,556.2 L327.4,562.4 L328.8,562.4 L330.0,564.7 L330.0,568.5 L328.8,571.1 L326.5,571.1 L325.3,568.5 M336.6,568.5 L340.1,558.8 M346.7,556.2 L346.7,571.1 L351.4,571.1 M358.3,559.6 L359.9,556.2 L359.9,571.1 M372.7,556.2 L368.0,556.2 L368.0,562.6 L371.5,562.6 L372.7,564.9 L372.7,568.5 L371.5,571.1 L369.2,571.1 L368.0,568.5 M392.9,571.1 L392.9,556.2 L389.3,566.4 L394.0,566.4 M402.2,570.2 L402.5,570.2 M410.7,556.2 L415.4,556.2 L412.8,562.4 L414.2,562.4 L415.4,564.7 L415.4,568.5 L414.2,571.1 L411.9,571.1 L410.7,568.5 M421.9,568.5 L425.5,558.8 M436.7,564.1 L433.2,564.1 L432.0,561.7 L432.0,558.8 L433.2,556.2 L435.5,556.2 L436.7,558.8 L436.7,568.5 L435.5,571.1 L433.2,571.1 L432.0,568.5 M444.9,570.2 L445.2,570.2 M453.4,558.8 L454.5,556.2 L456.9,556.2 L458.1,558.8 L458.1,561.7 L453.4,571.1 L458.1,571.1" fill="none" stroke="#fa0606" stroke-width="2.8" stroke-linecap="square" stroke-linejoin="round"/><g stroke="#fff" stroke-width="1" fill="none"><circle cx="215.5" cy="617.5" r="5.5"/><path d="M207,617.5H224M215.5,609V626M209.5,611.5L221.5,623.5M221.5,611.5L209.5,623.5"/></g></svg>
<div style="left:845px;top:49px;width:600px;height:696px;background:#d4d0c8;"></div>
<div style="left:846px;top:50px;width:600px;height:694px;background:#fff;"></div>
<div style="left:847px;top:51px;width:600px;height:692px;background:#d4d0c8;"></div>
<div style="left:845px;top:744px;width:600px;height:1px;background:#404040;"></div>
<div style="left:846px;top:743px;width:600px;height:1px;background:#808080;"></div>
<div style="left:849px;top:53px;width:600px;height:18px;background:linear-gradient(90deg,#0a246a 0px,#15317a 150px,#3f5fa0 420px,#6080b8 567px);"></div>
<svg style="left:851px;top:54px" width="16" height="16"><rect x="2.5" y="1.5" width="12" height="13.5" fill="#e8eefc" stroke="#9ab0e0"/><rect x="0.5" y="3.5" width="10" height="9" fill="#1c3c9c" stroke="#c8d4f4" stroke-width="0.8"/><path d="M2.2,5.6l1.3,4.8 1.6,-3.600 1.6,3.600 1.3,-4.8" fill="none" stroke="#fff" stroke-width="1.1"/><path d="M11.5,5h2.5M11.5,7.5h2.5M11.5,10h2.5M4,13.5h9" stroke="#7c94d4" stroke-width="0.8"/></svg>
<div class="t" style="left:868.5px;top:55px;font:bold 11.2px/14px 'Liberation Sans',sans-serif;color:#fff;letter-spacing:0.15px">GW0020CKA0</div>
<svg style="left:0;top:0" width="1416" height="100"><text x="944.45 956.95 969.45" y="66.30" font-family="'Liberation Sans','Noto Sans CJK SC',sans-serif" font-size="13" font-weight="bold" fill="#fff">阻抗单</text></svg>
<div class="t" style="left:987.3px;top:55px;font:bold 11.2px/14px 'Liberation Sans',sans-serif;color:#fff;letter-spacing:0.3px">- Microsoft Word</div>
<div style="left:849px;top:71px;width:600px;height:24px;background:#dedbd4;"></div>
<div style="left:849px;top:94px;width:600px;height:2px;background:#cfcbc2;"></div>
<div style="left:854px;top:76px;width:2px;height:2px;background:#8a8780;"></div>
<div style="left:855px;top:77px;width:1px;height:1px;background:#fff;"></div>
<div style="left:854px;top:80px;width:2px;height:2px;background:#8a8780;"></div>
<div style="left:855px;top:81px;width:1px;height:1px;background:#fff;"></div>
<div style="left:854px;top:84px;width:2px;height:2px;background:#8a8780;"></div>
<div style="left:855px;top:85px;width:1px;height:1px;background:#fff;"></div>
<div style="left:854px;top:88px;width:2px;height:2px;background:#8a8780;"></div>
<div style="left:855px;top:89px;width:1px;height:1px;background:#fff;"></div>
<svg style="left:0;top:0" width="1416" height="100"><text x="866.70 878.70" y="87.50" font-family="'Liberation Sans','Noto Sans CJK SC',sans-serif" font-size="12.6" fill="#000">文件</text><text x="892.0" y="87.2" font-family="Liberation Mono, monospace" font-size="11" fill="#000" textLength="17" lengthAdjust="spacingAndGlyphs">(F)</text><path d="M898.0,89.5h6" stroke="#000" stroke-width="1"/><text x="924.70 936.70" y="87.50" font-family="'Liberation Sans','Noto Sans CJK SC',sans-serif" font-size="12.6" fill="#000">编辑</text><text x="950.0" y="87.2" font-family="Liberation Mono, monospace" font-size="11" fill="#000" textLength="17" lengthAdjust="spacingAndGlyphs">(E)</text><path d="M956.0,89.5h6" stroke="#000" stroke-width="1"/><text x="982.70 994.70" y="87.50" font-family="'Liberation Sans','Noto Sans CJK SC',sans-serif" font-size="12.6" fill="#000">视图</text><text x="1008.0" y="87.2" font-family="Liberation Mono, monospace" font-size="11" fill="#000" textLength="17" lengthAdjust="spacingAndGlyphs">(V)</text><path d="M1014.0,89.5h6" stroke="#000" stroke-width="1"/><text x="1040.70 1052.70" y="87.50" font-family="'Liberation Sans','Noto Sans CJK SC',sans-serif" font-size="12.6" fill="#000">插入</text><text x="1066.0" y="87.2" font-family="Liberation Mono, monospace" font-size="11" fill="#000" textLength="17" lengthAdjust="spacingAndGlyphs">(I)</text><path d="M1072.0,89.5h6" stroke="#000" stroke-width="1"/><text x="1098.70 1110.70" y="87.50" font-family="'Liberation Sans','Noto Sans CJK SC',sans-serif" font-size="12.6" fill="#000">格式</text><text x="1124.0" y="87.2" font-family="Liberation Mono, monospace" font-size="11" fill="#000" textLength="17" lengthAdjust="spacingAndGlyphs">(O)</text><path d="M1130.0,89.5h6" stroke="#000" stroke-width="1"/><text x="1156.70 1168.70" y="87.50" font-family="'Liberation Sans','Noto Sans CJK SC',sans-serif" font-size="12.6" fill="#000">工具</text><text x="1182.0" y="87.2" font-family="Liberation Mono, monospace" font-size="11" fill="#000" textLength="17" lengthAdjust="spacingAndGlyphs">(T)</text><path d="M1188.0,89.5h6" stroke="#000" stroke-width="1"/><text x="1214.70 1226.70" y="87.50" font-family="'Liberation Sans','Noto Sans CJK SC',sans-serif" font-size="12.6" fill="#000">表格</text><text x="1240.0" y="87.2" font-family="Liberation Mono, monospace" font-size="11" fill="#000" textLength="17" lengthAdjust="spacingAndGlyphs">(A)</text><path d="M1246.0,89.5h6" stroke="#000" stroke-width="1"/><text x="1272.70 1284.70" y="87.50" font-family="'Liberation Sans','Noto Sans CJK SC',sans-serif" font-size="12.6" fill="#000">窗口</text><text x="1298.0" y="87.2" font-family="Liberation Mono, monospace" font-size="11" fill="#000" textLength="17" lengthAdjust="spacingAndGlyphs">(W)</text><path d="M1304.0,89.5h6" stroke="#000" stroke-width="1"/><text x="1330.70 1342.70" y="87.50" font-family="'Liberation Sans','Noto Sans CJK SC',sans-serif" font-size="12.6" fill="#000">帮助</text><text x="1356.0" y="87.2" font-family="Liberation Mono, monospace" font-size="11" fill="#000" textLength="17" lengthAdjust="spacingAndGlyphs">(H)</text><path d="M1362.0,89.5h6" stroke="#000" stroke-width="1"/><text x="1389" y="87.2" font-family="Liberation Mono, monospace" font-size="11" fill="#000" textLength="30" lengthAdjust="spacingAndGlyphs">Adobe</text></svg>
<div style="left:851px;top:96px;width:600px;height:26px;background:linear-gradient(180deg,#f6f5f1 0%,#eceae4 40%,#d6d2ca 100%);border-radius:4px 0 0 4px"></div>
<div style="left:849px;top:121px;width:600px;height:1px;background:#b8b4ac;"></div>
<div style="left:854px;top:102px;width:2px;height:2px;background:#8a8780;"></div>
<div style="left:855px;top:103px;width:1px;height:1px;background:#fff;"></div>
<div style="left:854px;top:106px;width:2px;height:2px;background:#8a8780;"></div>
<div style="left:855px;top:107px;width:1px;height:1px;background:#fff;"></div>
<div style="left:854px;top:110px;width:2px;height:2px;background:#8a8780;"></div>
<div style="left:855px;top:111px;width:1px;height:1px;background:#fff;"></div>
<div style="left:854px;top:114px;width:2px;height:2px;background:#8a8780;"></div>
<div style="left:855px;top:115px;width:1px;height:1px;background:#fff;"></div>
<div style="left:976px;top:100px;width:1px;height:19px;background:#a6a29a;"></div>
<div style="left:977px;top:100px;width:1px;height:19px;background:#fbfaf8;"></div>
<div style="left:1029px;top:100px;width:1px;height:19px;background:#a6a29a;"></div>
<div style="left:1030px;top:100px;width:1px;height:19px;background:#fbfaf8;"></div>
<div style="left:1113.5px;top:100px;width:1px;height:19px;background:#a6a29a;"></div>
<div style="left:1114.5px;top:100px;width:1px;height:19px;background:#fbfaf8;"></div>
<div style="left:1213.5px;top:100px;width:1px;height:19px;background:#a6a29a;"></div>
<div style="left:1214.5px;top:100px;width:1px;height:19px;background:#fbfaf8;"></div>
<div style="left:1287.5px;top:100px;width:1px;height:19px;background:#a6a29a;"></div>
<div style="left:1288.5px;top:100px;width:1px;height:19px;background:#fbfaf8;"></div>
<div style="left:1384px;top:100px;width:1px;height:19px;background:#a6a29a;"></div>
<div style="left:1385px;top:100px;width:1px;height:19px;background:#fbfaf8;"></div>
<svg style="left:0;top:0" width="1416" height="125"><defs><linearGradient id="pg" x1="0" y1="0" x2="1" y2="1"><stop offset="0" stop-color="#fff"/><stop offset="0.6" stop-color="#f4f6fc"/><stop offset="1" stop-color="#b8c4e0"/></linearGradient><linearGradient id="fd" x1="0" y1="0" x2="0" y2="1"><stop offset="0" stop-color="#fff0a0"/><stop offset="1" stop-color="#e0a020"/></linearGradient><linearGradient id="bl" x1="0" y1="0" x2="1" y2="1"><stop offset="0" stop-color="#8a8ae8"/><stop offset="1" stop-color="#3838a8"/></linearGradient></defs><g transform="translate(863,100)"><path d="M1.5,0.5h7l4,4v10.5h-11z" fill="url(#pg)" stroke="#6a7ea8"/><path d="M8.5,0.5v4h4" fill="#dfe6f4" stroke="#6a7ea8" stroke-width="0.8"/></g><g transform="translate(885,100)"><path d="M0.5,3.5h5l1.5,2h6v8.5h-12.5z" fill="#d8a830" stroke="#8a6a10" stroke-width="0.8"/><path d="M0.8,14l3,-7h12.5l-3.3,7z" fill="url(#fd)" stroke="#9a7a18" stroke-width="0.8"/><path d="M9,3.5c1.5,-2.5 4.5,-2.8 6,-0.5" fill="none" stroke="#3a5aa8" stroke-width="1.3"/><path d="M16,0.5v4h-4z" fill="#3a5aa8"/></g><g transform="translate(909,100)"><rect x="0.5" y="0.5" width="13.5" height="14" fill="url(#bl)" stroke="#2c2c88"/><rect x="2.5" y="0.8" width="9" height="6.7" fill="#fff"/><rect x="3.5" y="10" width="7.5" height="4.5" fill="#22225a"/><rect x="5" y="11" width="2.3" height="3" fill="#e8e8f8"/></g><g transform="translate(933,100)"><path d="M1.5,0.5h6l3.5,3.5v10.5h-9.5z" fill="url(#pg)" stroke="#6a7ea8"/><path d="M7.5,0.5v3.5h3.5" fill="#dfe6f4" stroke="#6a7ea8" stroke-width="0.8"/><circle cx="9.5" cy="11" r="4.3" fill="#e03018" stroke="#8a1808" stroke-width="0.8"/><rect x="6.7" y="10" width="5.6" height="2" fill="#fff"/></g><g transform="translate(954,100)"><path d="M4.5,5l5,-4.5 5.5,4.5v7h-10.5z" fill="#eef2fa" stroke="#6a7ea8"/><path d="M6,4.5h7.5v6h-7.5z" fill="#fff" stroke="#8a9cc0" stroke-width="0.7"/><rect x="11" y="5.5" width="1.8" height="1.8" fill="#e02020"/><rect x="0.5" y="9.5" width="11" height="5.5" fill="#e4eaf6" stroke="#5a6e98"/><path d="M2,11.5h4M2,13.2h4M7.5,11.5h3M7.5,13.2h3" stroke="#5a6e98" stroke-width="0.9"/></g><g transform="translate(983,100)"><path d="M4.5,1h8l-2,5.5h-8z" fill="#fff" stroke="#6a7ea8" stroke-width="0.9"/><path d="M5.5,3h5M5,4.6h5" stroke="#9aa8c8" stroke-width="0.8"/><path d="M0.5,7l2,-1.5h10.5l2,1.5v6h-14.5z" fill="#c8d0e4" stroke="#4a5a88" stroke-width="0.9"/><rect x="0.8" y="10.5" width="14" height="3.2" fill="#8a98bc"/><rect x="9.5" y="9" width="2.6" height="2.2" fill="#20c020" stroke="#0a700a" stroke-width="0.5"/><path d="M2,14.5h11.5" stroke="#4a5a88" stroke-width="1.2"/></g><g transform="translate(1007,100)"><path d="M1.5,0.5h6l3.5,3.5v10.5h-9.5z" fill="url(#pg)" stroke="#6a7ea8"/><circle cx="8.5" cy="7.5" r="4" fill="#e8f0ff" fill-opacity="0.85" stroke="#7a8cb8" stroke-width="1.2"/><path d="M11.3,10.5l3.5,3.8" stroke="#d89a28" stroke-width="2.4" stroke-linecap="round"/></g><text x="1034.18" y="114.30" font-family="'Liberation Sans','Noto Sans CJK TC',sans-serif" font-size="16.64" fill="#000">繁</text><path d="M1056.5,107h5.5l-2.75,3z" fill="#000"/><path d="M1072,109.5l4.3,5 8.5,-9.5" fill="none" stroke="#3a6ad8" stroke-width="2.4"/><text x="1068.50" y="108.00" font-family="'Liberation Sans','Noto Sans CJK SC',sans-serif" font-size="9" font-weight="500" fill="#000">字</text><text x="1077" y="108.5" font-family="Liberation Sans,sans-serif" font-weight="bold" font-size="9.5" fill="#000">A</text><g transform="translate(1091.5,100)"><rect x="0.5" y="3" width="4" height="11.5" fill="#8a7ad8" stroke="#4a3a98" stroke-width="0.8"/><rect x="1" y="1" width="3" height="2.5" rx="1" fill="#8a7ad8" stroke="#4a3a98" stroke-width="0.6"/><rect x="4.8" y="2" width="3.6" height="12.5" fill="#e8d060" stroke="#8a7a28" stroke-width="0.8"/><rect x="8.5" y="1" width="3.5" height="5" fill="#e8d060" stroke="#8a7a28" stroke-width="0.8"/><path d="M0.5,12h8" stroke="#fff" stroke-width="0.8"/><circle cx="10" cy="8.2" r="3.6" fill="#eef4ff" stroke="#7a8cb8" stroke-width="1.2"/><path d="M12.5,11l3,3.3" stroke="#d89a28" stroke-width="2.4" stroke-linecap="round"/></g><g transform="translate(1121,100)"><path d="M5,0.5l3.2,9M11.5,0.5l-3.2,9" stroke="#7888b0" stroke-width="1.6" fill="none"/><circle cx="5.2" cy="12" r="2.4" fill="none" stroke="#2a4ac8" stroke-width="1.8"/><circle cx="11.2" cy="12" r="2.4" fill="none" stroke="#2a4ac8" stroke-width="1.8"/></g><g transform="translate(1143.5,100)"><path d="M0.5,0.5h5.5l3,3v7h-8.5z" fill="#fff" stroke="#3a5ab8"/><path d="M2,4h4M2,6h5M2,8h5" stroke="#5a7ad0" stroke-width="0.9"/><path d="M6.5,4.5h5.5l3,3v7.5h-8.5z" fill="#fff" stroke="#3a5ab8"/><path d="M8,8.5h4M8,10.5h5.5M8,12.5h5.5" stroke="#5a7ad0" stroke-width="0.9"/></g><g transform="translate(1166.5,100)"><rect x="0.5" y="2" width="12" height="12.5" rx="1" fill="#e8b838" stroke="#8a6410"/><rect x="3.5" y="0.5" width="6" height="3.5" fill="#d8d8e4" stroke="#6a6a80" stroke-width="0.8"/><path d="M7,7.5h6l3,3v4.5h-9z" fill="#fff" stroke="#3a5a98" stroke-width="0.9"/><path d="M8.5,10.5h4M8.5,12.5h6" stroke="#6a8ac8" stroke-width="0.9"/></g><g transform="translate(1190.5,100)"><path d="M14.5,1.2l-5.5,6" stroke="#5a4ab8" stroke-width="3" stroke-linecap="round"/><path d="M10,6.2l-3,-2.5 -6.5,6.5 1.5,1 0.5,2.5 2.5,-0.5 1,1.5z" fill="#f0d868" stroke="#8a7a28" stroke-width="0.8"/><path d="M6.5,4.5l3,2.8" stroke="#a8a8b8" stroke-width="1.5"/></g><g transform="translate(1220.5,100)"><path d="M3,5.5c4,-4.5 10,-2 9,3.5c-0.5,2.5 -2.5,4 -4.5,4.5" fill="none" stroke="#2a5ad8" stroke-width="2.6"/><path d="M0.5,2l0.5,7 6.5,-2z" fill="#2a5ad8"/></g><path d="M1241,106.5h6l-3,3.2z" fill="#000"/><g transform="translate(1253.5,100)"><path d="M10,5.5c-4,-4.5 -10,-2 -9,3.5c0.5,2.5 2.5,4 4.5,4.5" fill="none" stroke="#b4b0a8" stroke-width="2.6"/><path d="M12.5,2l-0.5,7 -6.5,-2z" fill="#b4b0a8"/></g><path d="M1274.5,106.5h6l-3,3.2z" fill="#a8a49c"/><g transform="translate(1293,100)"><circle cx="7" cy="6" r="5.5" fill="#bcb8b0" stroke="#a09c94"/><ellipse cx="5.5" cy="11.8" rx="3.8" ry="2.2" fill="none" stroke="#9c9890" stroke-width="1.5"/><ellipse cx="11.5" cy="11.8" rx="3.8" ry="2.2" fill="none" stroke="#9c9890" stroke-width="1.5"/></g><g transform="translate(1316,100)"><rect x="0.5" y="1" width="12.5" height="12" fill="#fff" stroke="#5a7ac8" stroke-width="1.2"/><path d="M0.5,6h12.5M6.5,1v12" stroke="#5a7ac8" stroke-width="1"/><path d="M14,4.5l-7,8 -1.5,2.5 2.8,-1.2 7,-8z" fill="#f0b850" stroke="#a05a18" stroke-width="0.8"/><path d="M5.5,15l1,-2 1.2,1z" fill="#202020"/></g><g transform="translate(1338.5,100)"><rect x="0.5" y="1.5" width="5" height="3.5" fill="#fff" stroke="#3a5aa8"/><rect x="0.5" y="7" width="5" height="3.5" fill="#fff" stroke="#3a5aa8"/><rect x="0.5" y="12" width="5" height="3" fill="#fff" stroke="#3a5aa8"/><rect x="9.5" y="5" width="6.5" height="3.5" fill="#a8c0f0" stroke="#3a5aa8"/><path d="M9,6.8h-3" stroke="#000" stroke-width="1.2"/><path d="M5.5,6.8l2.2,-1.6v3.2z" fill="#000"/></g><g transform="translate(1362,100)"><rect x="0.5" y="0.5" width="12.5" height="11.5" fill="#fff" stroke="#3a5aa8"/><rect x="0.5" y="0.5" width="12.5" height="2.8" fill="#4a6ac8"/><path d="M0.5,6h12.5M0.5,9h12.5M4.5,3.3v8.7M8.5,3.3v8.7" stroke="#7a94d8" stroke-width="0.9"/><rect x="7" y="6.5" width="9" height="9" fill="#2a8a3a" stroke="#0a5a1a" stroke-width="0.8"/><path d="M9,8.5l5,5M14,8.5l-5,5" stroke="#fff" stroke-width="1.5"/></g><path d="M1392,102.5h6M1392,105.5h6M1392,108.5h6M1392,111.5h6M1392,114.5h6M1399.5,102.5h6M1399.5,105.5h6M1399.5,108.5h6M1399.5,111.5h6M1399.5,114.5h6" stroke="#000" stroke-width="1.4"/><path d="M1415,102v12" stroke="#000" stroke-width="2"/></svg>
<div style="left:849px;top:121px;width:600px;height:2px;background:#404040;"></div>
<div style="left:849px;top:121px;width:2px;height:572px;background:#404040;"></div>
<div style="left:851px;top:123px;width:600px;height:23px;background:#d4d0c8;"></div>
<div style="left:852px;top:128px;width:79px;height:12px;background:#808080;"></div>
<div style="left:931px;top:128px;width:500px;height:12px;background:#fff;"></div>
<svg style="left:0;top:0" width="1416" height="150"><path d="M862.7,131v6" stroke="#000" stroke-width="1"/><path d="M878.7,131v6" stroke="#000" stroke-width="1"/><path d="M894.7,131v6" stroke="#000" stroke-width="1"/><path d="M910.7,131v6" stroke="#000" stroke-width="1"/><path d="M926.7,131v6" stroke="#000" stroke-width="1"/><path d="M942.7,131v6" stroke="#000" stroke-width="1"/><path d="M958.7,131v6" stroke="#000" stroke-width="1"/><path d="M974.7,131v6" stroke="#000" stroke-width="1"/><path d="M990.7,131v6" stroke="#000" stroke-width="1"/><path d="M1006.7,131v6" stroke="#000" stroke-width="1"/><path d="M1022.7,131v6" stroke="#000" stroke-width="1"/><path d="M1038.7,131v6" stroke="#000" stroke-width="1"/><path d="M1054.7,131v6" stroke="#000" stroke-width="1"/><path d="M1070.7,131v6" stroke="#000" stroke-width="1"/><path d="M1086.7,131v6" stroke="#000" stroke-width="1"/><path d="M1102.7,131v6" stroke="#000" stroke-width="1"/><path d="M1118.7,131v6" stroke="#000" stroke-width="1"/><path d="M1134.7,131v6" stroke="#000" stroke-width="1"/><path d="M1150.7,131v6" stroke="#000" stroke-width="1"/><path d="M1166.7,131v6" stroke="#000" stroke-width="1"/><path d="M1182.7,131v6" stroke="#000" stroke-width="1"/><path d="M1198.7,131v6" stroke="#000" stroke-width="1"/><path d="M1214.7,131v6" stroke="#000" stroke-width="1"/><path d="M1230.7,131v6" stroke="#000" stroke-width="1"/><path d="M1246.7,131v6" stroke="#000" stroke-width="1"/><path d="M1262.7,131v6" stroke="#000" stroke-width="1"/><path d="M1278.7,131v6" stroke="#000" stroke-width="1"/><path d="M1294.7,131v6" stroke="#000" stroke-width="1"/><path d="M1310.7,131v6" stroke="#000" stroke-width="1"/><path d="M1326.7,131v6" stroke="#000" stroke-width="1"/><path d="M1342.7,131v6" stroke="#000" stroke-width="1"/><path d="M1358.7,131v6" stroke="#000" stroke-width="1"/><path d="M1374.7,131v6" stroke="#000" stroke-width="1"/><path d="M1390.7,131v6" stroke="#000" stroke-width="1"/><path d="M1406.7,131v6" stroke="#000" stroke-width="1"/><path d="M1422.7,131v6" stroke="#000" stroke-width="1"/><text x="870.7" y="138" font-family="Liberation Sans, sans-serif" font-size="9.5" text-anchor="middle" fill="#000">4</text><text x="902.7" y="138" font-family="Liberation Sans, sans-serif" font-size="9.5" text-anchor="middle" fill="#000">2</text><text x="966.7" y="138" font-family="Liberation Sans, sans-serif" font-size="9.5" text-anchor="middle" fill="#000">2</text><text x="1030.7" y="138" font-family="Liberation Sans, sans-serif" font-size="9.5" text-anchor="middle" fill="#000">6</text><text x="1062.7" y="138" font-family="Liberation Sans, sans-serif" font-size="9.5" text-anchor="middle" fill="#000">8</text><text x="1094.7" y="138" font-family="Liberation Sans, sans-serif" font-size="9.5" text-anchor="middle" fill="#000">10</text><text x="1126.7" y="138" font-family="Liberation Sans, sans-serif" font-size="9.5" text-anchor="middle" fill="#000">12</text><text x="1190.7" y="138" font-family="Liberation Sans, sans-serif" font-size="9.5" text-anchor="middle" fill="#000">16</text><text x="1222.7" y="138" font-family="Liberation Sans, sans-serif" font-size="9.5" text-anchor="middle" fill="#000">18</text><text x="1254.7" y="138" font-family="Liberation Sans, sans-serif" font-size="9.5" text-anchor="middle" fill="#000">20</text><text x="1289.7" y="138" font-family="Liberation Sans, sans-serif" font-size="9.5" text-anchor="middle" fill="#000">22</text><text x="1318.7" y="138" font-family="Liberation Sans, sans-serif" font-size="9.5" text-anchor="middle" fill="#000">24</text><text x="1350.7" y="138" font-family="Liberation Sans, sans-serif" font-size="9.5" text-anchor="middle" fill="#000">26</text><text x="1385.7" y="138" font-family="Liberation Sans, sans-serif" font-size="9.5" text-anchor="middle" fill="#000">28</text><text x="1414.7" y="138" font-family="Liberation Sans, sans-serif" font-size="9.5" text-anchor="middle" fill="#000">30</text><text x="1155.7" y="138" font-family="Liberation Sans, sans-serif" font-size="9.5" text-anchor="middle" fill="#000">14</text><path d="M1162.2,129.5h7M1162.2,131.5h7M1162.2,133.5h7M1162.2,135.5h7M1162.2,137.5h7M1162.2,139.5h7M1162.7,128v12M1164.7,128v12M1166.7,128v12M1168.7,128v12" stroke="#8a8a8a" stroke-width="1"/><path d="M1277.2,129.5h7M1277.2,131.5h7M1277.2,133.5h7M1277.2,135.5h7M1277.2,137.5h7M1277.2,139.5h7M1277.7,128v12M1279.7,128v12M1281.7,128v12M1283.7,128v12" stroke="#8a8a8a" stroke-width="1"/><path d="M1373.4,129.5h7M1373.4,131.5h7M1373.4,133.5h7M1373.4,135.5h7M1373.4,137.5h7M1373.4,139.5h7M1373.9,128v12M1375.9,128v12M1377.9,128v12M1379.9,128v12" stroke="#8a8a8a" stroke-width="1"/><path d="M930.5,125.5h8v4l-4,4 -4,-4z" fill="#d4d0c8" stroke="#808080"/><path d="M930.5,141.5v-4l4,-4 4,4v4z" fill="#d4d0c8" stroke="#808080"/><rect x="930.5" y="141.5" width="8" height="4" fill="#d4d0c8" stroke="#808080"/><path d="M931.5,130h6M931.5,132h6M931.5,134h6M931.5,136h6" stroke="#707070" stroke-dasharray="1 1"/><path d="M997.5,139.5v-5l4,-4 4,4v5z" fill="#d4d0c8" stroke="#808080"/><path d="M998.5,130h6M998.5,132h6" stroke="#707070" stroke-dasharray="1 1"/><path d="M962.5,141v3M990.5,141v3" stroke="#808080"/></svg>
<div style="left:851px;top:146px;width:600px;height:531px;background:#fff;"></div>
<div style="left:851px;top:146px;width:565px;height:531px;overflow:hidden"><svg style="left:-851px;top:-146px" width="1416" height="700"><path d="M934.6,166.3H1420" stroke="#a8a8a8" stroke-width="1.1"/><path d="M934.6,186.4H1420" stroke="#a8a8a8" stroke-width="1.1"/><path d="M934.6,206.5H1420" stroke="#a8a8a8" stroke-width="1.1"/><path d="M934.6,226.6H1420" stroke="#a8a8a8" stroke-width="1.1"/><path d="M934.6,246.7H1420" stroke="#a8a8a8" stroke-width="1.1"/><path d="M934.6,266.8H1420" stroke="#a8a8a8" stroke-width="1.1"/><path d="M934.6,286.9H1420" stroke="#a8a8a8" stroke-width="1.1"/><path d="M934.6,307.0H1420" stroke="#a8a8a8" stroke-width="1.1"/><path d="M934.6,328.1H1420" stroke="#a8a8a8" stroke-width="1.1"/><path d="M934.6,349.1H1420" stroke="#a8a8a8" stroke-width="1.1"/><path d="M934.6,370.1H1420" stroke="#a8a8a8" stroke-width="1.1"/><path d="M934.6,391.2H1420" stroke="#a8a8a8" stroke-width="1.1"/><path d="M934.6,412.2H1420" stroke="#a8a8a8" stroke-width="1.1"/><path d="M934.6,433.3H1420" stroke="#a8a8a8" stroke-width="1.1"/><path d="M934.6,454.4H1420" stroke="#a8a8a8" stroke-width="1.1"/><path d="M934.6,475.4H1420" stroke="#a8a8a8" stroke-width="1.1"/><path d="M934.6,496.5H1420" stroke="#a8a8a8" stroke-width="1.1"/><path d="M934.6,517.5H1420" stroke="#a8a8a8" stroke-width="1.1"/><path d="M934.6,538.5H1420" stroke="#a8a8a8" stroke-width="1.1"/><path d="M934.6,559.6H1420" stroke="#a8a8a8" stroke-width="1.1"/><path d="M934.6,580.7H1420" stroke="#a8a8a8" stroke-width="1.1"/><path d="M934.6,601.7H1420" stroke="#a8a8a8" stroke-width="1.1"/><path d="M934.6,621.8H1420" stroke="#a8a8a8" stroke-width="1.1"/><path d="M934.6,641.9H1420" stroke="#a8a8a8" stroke-width="1.1"/><path d="M934.6,662.0H1420" stroke="#a8a8a8" stroke-width="1.1"/><path d="M934.6,146.0V677.0" stroke="#a8a8a8" stroke-width="1.1"/><path d="M1001.3,146.0V246.7" stroke="#a8a8a8" stroke-width="1.1"/><path d="M1001.3,307.0V677.0" stroke="#a8a8a8" stroke-width="1.1"/><path d="M1165.2,226.6V246.7" stroke="#a8a8a8" stroke-width="1.1"/><path d="M1165.2,286.9V307.0" stroke="#a8a8a8" stroke-width="1.1"/><path d="M1165.2,328.1V677.0" stroke="#a8a8a8" stroke-width="1.1"/><path d="M1280.2,226.6V677.0" stroke="#a8a8a8" stroke-width="1.1"/><path d="M1376.4,226.6V246.7" stroke="#a8a8a8" stroke-width="1.1"/><path d="M1376.4,286.9V677.0" stroke="#a8a8a8" stroke-width="1.1"/><path d="M975.0,154.3V158.5H970.0" fill="none" stroke="#848484" stroke-width="1.2"/><path d="M968.2,158.5L971.6,155.7V161.3Z" fill="#848484"/><text x="1176.30" y="161.70" font-family="Liberation Mono, monospace" font-size="16" font-weight="normal" textLength="32.00" lengthAdjust="spacingAndGlyphs" fill="#000" xml:space="preserve">Core</text><text x="1232.30" y="161.70" font-family="Liberation Serif, serif" font-size="16" font-weight="normal" textLength="8.00" lengthAdjust="spacing" fill="#000">5</text><text x="1240.30" y="161.70" font-family="Liberation Mono, monospace" font-size="16" font-weight="normal" textLength="8.00" lengthAdjust="spacingAndGlyphs" fill="#000" xml:space="preserve">.</text><text x="1248.30" y="161.70" font-family="Liberation Serif, serif" font-size="16" font-weight="normal" textLength="32.00" lengthAdjust="spacing" fill="#000">1181</text><text x="1288.30" y="161.70" font-family="Liberation Mono, monospace" font-size="16" font-weight="normal" textLength="24.00" lengthAdjust="spacingAndGlyphs" fill="#000" xml:space="preserve">mil</text><path d="M1319.3,154.3V158.5H1314.3" fill="none" stroke="#848484" stroke-width="1.2"/><path d="M1312.5,158.5L1315.9,155.7V161.3Z" fill="#848484"/><text x="955.95" y="181.80" font-family="Liberation Mono, monospace" font-size="16" font-weight="normal" textLength="8.00" lengthAdjust="spacingAndGlyphs" fill="#000" xml:space="preserve">P</text><text x="963.95" y="181.80" font-family="Liberation Serif, serif" font-size="16" font-weight="normal" textLength="16.00" lengthAdjust="spacing" fill="#000">15</text><path d="M987.0,174.4V178.6H982.0" fill="none" stroke="#848484" stroke-width="1.2"/><path d="M980.2,178.6L983.6,175.8V181.4Z" fill="#848484"/><path d="M975.0,194.5V198.7H970.0" fill="none" stroke="#848484" stroke-width="1.2"/><path d="M968.2,198.7L971.6,195.9V201.5Z" fill="#848484"/><text x="1172.30" y="201.90" font-family="Liberation Serif, serif" font-size="16" font-weight="normal" textLength="32.00" lengthAdjust="spacing" fill="#000">2116</text><text x="1236.30" y="201.90" font-family="Liberation Serif, serif" font-size="16" font-weight="normal" textLength="8.00" lengthAdjust="spacing" fill="#000">4</text><text x="1244.30" y="201.90" font-family="Liberation Mono, monospace" font-size="16" font-weight="normal" textLength="8.00" lengthAdjust="spacingAndGlyphs" fill="#000" xml:space="preserve">.</text><text x="1252.30" y="201.90" font-family="Liberation Serif, serif" font-size="16" font-weight="normal" textLength="32.00" lengthAdjust="spacing" fill="#000">5395</text><text x="1292.30" y="201.90" font-family="Liberation Mono, monospace" font-size="16" font-weight="normal" textLength="24.00" lengthAdjust="spacingAndGlyphs" fill="#000" xml:space="preserve">mil</text><path d="M1323.3,194.5V198.7H1318.3" fill="none" stroke="#848484" stroke-width="1.2"/><path d="M1316.5,198.7L1319.9,195.9V201.5Z" fill="#848484"/><text x="955.95" y="222.00" font-family="Liberation Mono, monospace" font-size="16" font-weight="normal" textLength="8.00" lengthAdjust="spacingAndGlyphs" fill="#000" xml:space="preserve">L</text><text x="963.95" y="222.00" font-family="Liberation Serif, serif" font-size="16" font-weight="normal" textLength="16.00" lengthAdjust="spacing" fill="#000">16</text><path d="M987.0,214.6V218.8H982.0" fill="none" stroke="#848484" stroke-width="1.2"/><path d="M980.2,218.8L983.6,216.0V221.6Z" fill="#848484"/><rect x="1012" y="175.3" width="380" height="5.4" fill="#3a1c08"/><rect x="1015" y="176.5" width="374" height="3" fill="#e8923c"/><rect x="1015" y="177.3" width="374" height="1.2" fill="#f4a95c"/><rect x="1012" y="214.6" width="380" height="5.4" fill="#3a1c08"/><rect x="1015" y="215.79999999999998" width="374" height="3" fill="#e8923c"/><rect x="1015" y="216.6" width="374" height="1.2" fill="#f4a95c"/><path d="M943.1,234.7V238.9H938.1" fill="none" stroke="#848484" stroke-width="1.2"/><path d="M936.3,238.9L939.7,236.1V241.7Z" fill="#848484"/><path d="M1009.8,234.7V238.9H1004.8" fill="none" stroke="#848484" stroke-width="1.2"/><path d="M1003.0,238.9L1006.4,236.1V241.7Z" fill="#848484"/><path d="M1173.7,234.7V238.9H1168.7" fill="none" stroke="#848484" stroke-width="1.2"/><path d="M1166.9,238.9L1170.3,236.1V241.7Z" fill="#848484"/><path d="M1288.7,234.7V238.9H1283.7" fill="none" stroke="#848484" stroke-width="1.2"/><path d="M1281.9,238.9L1285.3,236.1V241.7Z" fill="#848484"/><path d="M1384.9,234.7V238.9H1379.9" fill="none" stroke="#848484" stroke-width="1.2"/><path d="M1378.1,238.9L1381.5,236.1V241.7Z" fill="#848484"/><path d="M1173.7,295.0V299.2H1168.7" fill="none" stroke="#848484" stroke-width="1.2"/><path d="M1166.9,299.2L1170.3,296.4V302.0Z" fill="#848484"/><path d="M1288.7,295.0V299.2H1283.7" fill="none" stroke="#848484" stroke-width="1.2"/><path d="M1281.9,299.2L1285.3,296.4V302.0Z" fill="#848484"/><path d="M1384.9,295.0V299.2H1379.9" fill="none" stroke="#848484" stroke-width="1.2"/><path d="M1378.1,299.2L1381.5,296.4V302.0Z" fill="#848484"/><text x="1199.72 1215.72 1231.72 1247.72 1263.72" y="262.20" font-family="'Liberation Sans','Noto Sans CJK SC',sans-serif" font-size="16.96" fill="#000">理论板厚：</text><text x="1281.20" y="262.20" font-family="Liberation Serif, serif" font-size="16" font-weight="normal" textLength="8.00" lengthAdjust="spacing" fill="#000">2</text><text x="1289.20" y="262.20" font-family="Liberation Mono, monospace" font-size="16" font-weight="normal" textLength="8.00" lengthAdjust="spacingAndGlyphs" fill="#000" xml:space="preserve">.</text><text x="1297.20" y="262.20" font-family="Liberation Serif, serif" font-size="16" font-weight="normal" textLength="16.00" lengthAdjust="spacing" fill="#000">34</text><text x="1321.20" y="262.20" font-family="Liberation Mono, monospace" font-size="16" font-weight="normal" textLength="16.00" lengthAdjust="spacingAndGlyphs" fill="#000" xml:space="preserve">mm</text><path d="M1344.2,254.8V259.0H1339.2" fill="none" stroke="#848484" stroke-width="1.2"/><path d="M1337.4,259.0L1340.8,256.2V261.8Z" fill="#848484"/><text x="1199.72 1215.72 1231.72 1247.72 1263.72" y="282.30" font-family="'Liberation Sans','Noto Sans CJK SC',sans-serif" font-size="16.96" fill="#000">完成板厚：</text><text x="1281.20" y="282.30" font-family="Liberation Serif, serif" font-size="16" font-weight="normal" textLength="8.00" lengthAdjust="spacing" fill="#000">2</text><text x="1289.20" y="282.30" font-family="Liberation Mono, monospace" font-size="16" font-weight="normal" textLength="8.00" lengthAdjust="spacingAndGlyphs" fill="#000" xml:space="preserve">.</text><text x="1297.20" y="282.30" font-family="Liberation Serif, serif" font-size="16" font-weight="normal" textLength="8.00" lengthAdjust="spacing" fill="#000">4</text><text x="1313.20" y="282.30" font-family="Liberation Mono, monospace" font-size="16" font-weight="normal" textLength="24.00" lengthAdjust="spacingAndGlyphs" fill="#000" xml:space="preserve">+/-</text><text x="1337.20" y="282.30" font-family="Liberation Serif, serif" font-size="16" font-weight="normal" textLength="8.00" lengthAdjust="spacing" fill="#000">0</text><text x="1345.20" y="282.30" font-family="Liberation Mono, monospace" font-size="16" font-weight="normal" textLength="8.00" lengthAdjust="spacingAndGlyphs" fill="#000" xml:space="preserve">.</text><text x="1353.20" y="282.30" font-family="Liberation Serif, serif" font-size="16" font-weight="normal" textLength="16.00" lengthAdjust="spacing" fill="#000">24</text><text x="1377.20" y="282.30" font-family="Liberation Mono, monospace" font-size="16" font-weight="normal" textLength="16.00" lengthAdjust="spacingAndGlyphs" fill="#000" xml:space="preserve">mm</text><path d="M1400.2,274.9V279.1H1395.2" fill="none" stroke="#848484" stroke-width="1.2"/><path d="M1393.4,279.1L1396.8,276.3V281.9Z" fill="#848484"/><text x="935.12 951.12 967.12 983.12 999.12 1015.12" y="302.40" font-family="'Liberation Sans','Noto Sans CJK SC',sans-serif" font-size="16.96" fill="#000">阻抗计算值：</text><path d="M1034.6,295.0V299.2H1029.6" fill="none" stroke="#848484" stroke-width="1.2"/><path d="M1027.8,299.2L1031.2,296.4V302.0Z" fill="#848484"/><text x="951.47 967.47" y="323.45" font-family="'Liberation Sans','Noto Sans CJK SC',sans-serif" font-size="16.96" fill="#000">层别</text><path d="M991.0,316.1V320.2H986.0" fill="none" stroke="#848484" stroke-width="1.2"/><path d="M984.2,320.2L987.6,317.4V323.1Z" fill="#848484"/><polyline points="951.0,325.1 952.5,326.6 954.0,325.1 955.5,326.6 957.0,325.1 958.5,326.6 960.0,325.1 961.5,326.6 963.0,325.1 964.5,326.6 966.0,325.1 967.5,326.6 969.0,325.1 970.5,326.6 972.0,325.1 973.5,326.6 975.0,325.1 976.5,326.6 978.0,325.1 979.5,326.6 981.0,325.1 982.5,326.6 984.0,325.1 985.5,326.6" fill="none" stroke="#1a8a1a" stroke-width="0.9"/><text x="1090.12 1106.12 1122.12 1138.12" y="323.45" font-family="'Liberation Sans','Noto Sans CJK SC',sans-serif" font-size="16.96" fill="#000">调整线宽</text><text x="1154.6" y="323.4" font-family="Liberation Serif, serif" font-size="15" fill="#000">/</text><text x="1158.62 1174.62" y="323.45" font-family="'Liberation Sans','Noto Sans CJK SC',sans-serif" font-size="16.96" fill="#000">线间</text><path d="M1198.1,316.1V320.2H1193.1" fill="none" stroke="#848484" stroke-width="1.2"/><path d="M1191.3,320.2L1194.7,317.4V323.1Z" fill="#848484"/><text x="1280.72 1296.72 1312.72" y="323.45" font-family="'Liberation Sans','Noto Sans CJK SC',sans-serif" font-size="16.96" fill="#000">计算值</text><text x="1329.2" y="323.4" font-family="Liberation Serif, serif" font-size="14.5" fill="#000">(ohm)</text><path d="M1370.7,316.1V320.2H1365.7" fill="none" stroke="#848484" stroke-width="1.2"/><path d="M1363.9,320.2L1367.3,317.4V323.1Z" fill="#848484"/><text x="947.95" y="344.50" font-family="Liberation Mono, monospace" font-size="16" font-weight="normal" textLength="8.00" lengthAdjust="spacingAndGlyphs" fill="#cc1414" xml:space="preserve">L</text><text x="955.95" y="344.50" font-family="Liberation Serif, serif" font-size="16" font-weight="normal" textLength="8.00" lengthAdjust="spacing" fill="#cc1414">1</text><text x="963.95" y="344.50" font-family="Liberation Mono, monospace" font-size="16" font-weight="normal" textLength="8.00" lengthAdjust="spacingAndGlyphs" fill="#cc1414" xml:space="preserve">/</text><text x="971.95" y="344.50" font-family="Liberation Serif, serif" font-size="16" font-weight="normal" textLength="16.00" lengthAdjust="spacing" fill="#cc1414">16</text><path d="M995.0,337.1V341.3H990.0" fill="none" stroke="#848484" stroke-width="1.2"/><path d="M988.2,341.3L991.6,338.5V344.1Z" fill="#848484"/><text x="1108.20" y="344.50" font-family="Liberation Serif, serif" font-size="16" font-weight="normal" textLength="8.00" lengthAdjust="spacing" fill="#cc1414">6</text><text x="1116.20" y="344.50" font-family="Liberation Mono, monospace" font-size="16" font-weight="normal" textLength="8.00" lengthAdjust="spacingAndGlyphs" fill="#cc1414" xml:space="preserve">.</text><text x="1124.20" y="344.50" font-family="Liberation Serif, serif" font-size="16" font-weight="normal" textLength="8.00" lengthAdjust="spacing" fill="#cc1414">3</text><text x="1140.20" y="344.50" font-family="Liberation Mono, monospace" font-size="16" font-weight="normal" textLength="24.00" lengthAdjust="spacingAndGlyphs" fill="#cc1414" xml:space="preserve">mil</text><text x="1166.2" y="344.5" font-family="Liberation Serif, serif" font-size="15" fill="#cc1414" xml:space="preserve" textLength="61" lengthAdjust="spacingAndGlyphs">to  6.4 mil</text><path d="M1234.7,337.1V341.3H1229.7" fill="none" stroke="#848484" stroke-width="1.2"/><path d="M1227.9,341.3L1231.3,338.5V344.1Z" fill="#848484"/><text x="1313.50" y="344.50" font-family="Liberation Serif, serif" font-size="16" font-weight="normal" textLength="16.00" lengthAdjust="spacing" fill="#cc1414">50</text><text x="1329.50" y="344.50" font-family="Liberation Mono, monospace" font-size="16" font-weight="normal" textLength="8.00" lengthAdjust="spacingAndGlyphs" fill="#cc1414" xml:space="preserve">.</text><text x="1337.50" y="344.50" font-family="Liberation Serif, serif" font-size="16" font-weight="normal" textLength="8.00" lengthAdjust="spacing" fill="#cc1414">9</text><path d="M1352.5,337.1V341.3H1347.5" fill="none" stroke="#848484" stroke-width="1.2"/><path d="M1345.7,341.3L1349.1,338.5V344.1Z" fill="#848484"/><text x="947.95" y="365.55" font-family="Liberation Mono, monospace" font-size="16" font-weight="normal" textLength="8.00" lengthAdjust="spacingAndGlyphs" fill="#cc1414" xml:space="preserve">L</text><text x="955.95" y="365.55" font-family="Liberation Serif, serif" font-size="16" font-weight="normal" textLength="8.00" lengthAdjust="spacing" fill="#cc1414">1</text><text x="963.95" y="365.55" font-family="Liberation Mono, monospace" font-size="16" font-weight="normal" textLength="8.00" lengthAdjust="spacingAndGlyphs" fill="#cc1414" xml:space="preserve">/</text><text x="971.95" y="365.55" font-family="Liberation Serif, serif" font-size="16" font-weight="normal" textLength="16.00" lengthAdjust="spacing" fill="#cc1414">16</text><path d="M995.0,358.1V362.3H990.0" fill="none" stroke="#848484" stroke-width="1.2"/><path d="M988.2,362.3L991.6,359.5V365.1Z" fill="#848484"/><text x="1076.20" y="365.55" font-family="Liberation Serif, serif" font-size="16" font-weight="normal" textLength="8.00" lengthAdjust="spacing" fill="#cc1414">4</text><text x="1084.20" y="365.55" font-family="Liberation Mono, monospace" font-size="16" font-weight="normal" textLength="8.00" lengthAdjust="spacingAndGlyphs" fill="#cc1414" xml:space="preserve">.</text><text x="1092.20" y="365.55" font-family="Liberation Serif, serif" font-size="16" font-weight="normal" textLength="8.00" lengthAdjust="spacing" fill="#cc1414">7</text><text x="1100.20" y="365.55" font-family="Liberation Mono, monospace" font-size="16" font-weight="normal" textLength="8.00" lengthAdjust="spacingAndGlyphs" fill="#cc1414" xml:space="preserve">/</text><text x="1108.20" y="365.55" font-family="Liberation Serif, serif" font-size="16" font-weight="normal" textLength="8.00" lengthAdjust="spacing" fill="#cc1414">8</text><text x="1116.20" y="365.55" font-family="Liberation Mono, monospace" font-size="16" font-weight="normal" textLength="8.00" lengthAdjust="spacingAndGlyphs" fill="#cc1414" xml:space="preserve">.</text><text x="1124.20" y="365.55" font-family="Liberation Serif, serif" font-size="16" font-weight="normal" textLength="8.00" lengthAdjust="spacing" fill="#cc1414">3</text><text x="1140.20" y="365.55" font-family="Liberation Mono, monospace" font-size="16" font-weight="normal" textLength="24.00" lengthAdjust="spacingAndGlyphs" fill="#cc1414" xml:space="preserve">mil</text><path d="M1173.7,358.1V362.3H1168.7" fill="none" stroke="#848484" stroke-width="1.2"/><path d="M1166.9,362.3L1170.3,359.5V365.1Z" fill="#848484"/><text x="1313.50" y="365.55" font-family="Liberation Serif, serif" font-size="16" font-weight="normal" textLength="16.00" lengthAdjust="spacing" fill="#cc1414">99</text><text x="1329.50" y="365.55" font-family="Liberation Mono, monospace" font-size="16" font-weight="normal" textLength="8.00" lengthAdjust="spacingAndGlyphs" fill="#cc1414" xml:space="preserve">.</text><text x="1337.50" y="365.55" font-family="Liberation Serif, serif" font-size="16" font-weight="normal" textLength="8.00" lengthAdjust="spacing" fill="#cc1414">9</text><path d="M1352.5,358.1V362.3H1347.5" fill="none" stroke="#848484" stroke-width="1.2"/><path d="M1345.7,362.3L1349.1,359.5V365.1Z" fill="#848484"/><text x="959.95" y="386.60" font-family="Liberation Mono, monospace" font-size="16" font-weight="normal" textLength="8.00" lengthAdjust="spacingAndGlyphs" fill="#cc1414" xml:space="preserve">L</text><text x="967.95" y="386.60" font-family="Liberation Serif, serif" font-size="16" font-weight="normal" textLength="8.00" lengthAdjust="spacing" fill="#cc1414">1</text><path d="M983.0,379.2V383.4H978.0" fill="none" stroke="#848484" stroke-width="1.2"/><path d="M976.2,383.4L979.6,380.6V386.2Z" fill="#848484"/><text x="1100.20" y="386.60" font-family="Liberation Serif, serif" font-size="16" font-weight="normal" textLength="16.00" lengthAdjust="spacing" fill="#cc1414">16</text><text x="1116.20" y="386.60" font-family="Liberation Mono, monospace" font-size="16" font-weight="normal" textLength="8.00" lengthAdjust="spacingAndGlyphs" fill="#cc1414" xml:space="preserve">.</text><text x="1124.20" y="386.60" font-family="Liberation Serif, serif" font-size="16" font-weight="normal" textLength="8.00" lengthAdjust="spacing" fill="#cc1414">2</text><text x="1140.20" y="386.60" font-family="Liberation Mono, monospace" font-size="16" font-weight="normal" textLength="24.00" lengthAdjust="spacingAndGlyphs" fill="#cc1414" xml:space="preserve">mil</text><path d="M1173.7,379.2V383.4H1168.7" fill="none" stroke="#848484" stroke-width="1.2"/><path d="M1166.9,383.4L1170.3,380.6V386.2Z" fill="#848484"/><text x="1321.50" y="386.60" font-family="Liberation Serif, serif" font-size="16" font-weight="normal" textLength="16.00" lengthAdjust="spacing" fill="#cc1414">51</text><path d="M1344.5,379.2V383.4H1339.5" fill="none" stroke="#848484" stroke-width="1.2"/><path d="M1337.7,383.4L1341.1,380.6V386.2Z" fill="#848484"/><text x="1388.82 1404.82" y="386.90" font-family="'Liberation Sans','Noto Sans CJK SC',sans-serif" font-size="16.96" font-weight="bold" fill="#0000e6">屏蔽</text><text x="959.95" y="407.65" font-family="Liberation Mono, monospace" font-size="16" font-weight="normal" textLength="8.00" lengthAdjust="spacingAndGlyphs" fill="#cc1414" xml:space="preserve">L</text><text x="967.95" y="407.65" font-family="Liberation Serif, serif" font-size="16" font-weight="normal" textLength="8.00" lengthAdjust="spacing" fill="#cc1414">1</text><path d="M983.0,400.2V404.4H978.0" fill="none" stroke="#848484" stroke-width="1.2"/><path d="M976.2,404.4L979.6,401.6V407.2Z" fill="#848484"/><text x="1076.20" y="407.65" font-family="Liberation Serif, serif" font-size="16" font-weight="normal" textLength="8.00" lengthAdjust="spacing" fill="#cc1414">9</text><text x="1084.20" y="407.65" font-family="Liberation Mono, monospace" font-size="16" font-weight="normal" textLength="8.00" lengthAdjust="spacingAndGlyphs" fill="#cc1414" xml:space="preserve">.</text><text x="1092.20" y="407.65" font-family="Liberation Serif, serif" font-size="16" font-weight="normal" textLength="8.00" lengthAdjust="spacing" fill="#cc1414">3</text><text x="1100.20" y="407.65" font-family="Liberation Mono, monospace" font-size="16" font-weight="normal" textLength="8.00" lengthAdjust="spacingAndGlyphs" fill="#cc1414" xml:space="preserve">/</text><text x="1108.20" y="407.65" font-family="Liberation Serif, serif" font-size="16" font-weight="normal" textLength="8.00" lengthAdjust="spacing" fill="#cc1414">8</text><text x="1116.20" y="407.65" font-family="Liberation Mono, monospace" font-size="16" font-weight="normal" textLength="8.00" lengthAdjust="spacingAndGlyphs" fill="#cc1414" xml:space="preserve">.</text><text x="1124.20" y="407.65" font-family="Liberation Serif, serif" font-size="16" font-weight="normal" textLength="8.00" lengthAdjust="spacing" fill="#cc1414">7</text><text x="1140.20" y="407.65" font-family="Liberation Mono, monospace" font-size="16" font-weight="normal" textLength="24.00" lengthAdjust="spacingAndGlyphs" fill="#cc1414" xml:space="preserve">mil</text><path d="M1173.7,400.2V404.4H1168.7" fill="none" stroke="#848484" stroke-width="1.2"/><path d="M1166.9,404.4L1170.3,401.6V407.2Z" fill="#848484"/><text x="1309.50" y="407.65" font-family="Liberation Serif, serif" font-size="16" font-weight="normal" textLength="24.00" lengthAdjust="spacing" fill="#cc1414">100</text><text x="1333.50" y="407.65" font-family="Liberation Mono, monospace" font-size="16" font-weight="normal" textLength="8.00" lengthAdjust="spacingAndGlyphs" fill="#cc1414" xml:space="preserve">.</text><text x="1341.50" y="407.65" font-family="Liberation Serif, serif" font-size="16" font-weight="normal" textLength="8.00" lengthAdjust="spacing" fill="#cc1414">2</text><path d="M1356.5,400.2V404.4H1351.5" fill="none" stroke="#848484" stroke-width="1.2"/><path d="M1349.7,404.4L1353.1,401.6V407.2Z" fill="#848484"/><text x="1388.82 1404.82" y="407.95" font-family="'Liberation Sans','Noto Sans CJK SC',sans-serif" font-size="16.96" font-weight="bold" fill="#0000e6">屏蔽</text><text x="947.95" y="428.70" font-family="Liberation Mono, monospace" font-size="16" font-weight="normal" textLength="8.00" lengthAdjust="spacingAndGlyphs" fill="#cc1414" xml:space="preserve">L</text><text x="955.95" y="428.70" font-family="Liberation Serif, serif" font-size="16" font-weight="normal" textLength="8.00" lengthAdjust="spacing" fill="#cc1414">3</text><text x="963.95" y="428.70" font-family="Liberation Mono, monospace" font-size="16" font-weight="normal" textLength="8.00" lengthAdjust="spacingAndGlyphs" fill="#cc1414" xml:space="preserve">/</text><text x="971.95" y="428.70" font-family="Liberation Serif, serif" font-size="16" font-weight="normal" textLength="16.00" lengthAdjust="spacing" fill="#cc1414">14</text><path d="M995.0,421.3V425.5H990.0" fill="none" stroke="#848484" stroke-width="1.2"/><path d="M988.2,425.5L991.6,422.7V428.3Z" fill="#848484"/><text x="1108.20" y="428.70" font-family="Liberation Serif, serif" font-size="16" font-weight="normal" textLength="8.00" lengthAdjust="spacing" fill="#cc1414">4</text><text x="1116.20" y="428.70" font-family="Liberation Mono, monospace" font-size="16" font-weight="normal" textLength="8.00" lengthAdjust="spacingAndGlyphs" fill="#cc1414" xml:space="preserve">.</text><text x="1124.20" y="428.70" font-family="Liberation Serif, serif" font-size="16" font-weight="normal" textLength="8.00" lengthAdjust="spacing" fill="#cc1414">8</text><text x="1140.20" y="428.70" font-family="Liberation Mono, monospace" font-size="16" font-weight="normal" textLength="24.00" lengthAdjust="spacingAndGlyphs" fill="#cc1414" xml:space="preserve">mil</text><text x="1166.2" y="428.7" font-family="Liberation Serif, serif" font-size="15" fill="#cc1414" xml:space="preserve" textLength="61" lengthAdjust="spacingAndGlyphs">to  4.6 mil</text><path d="M1234.7,421.3V425.5H1229.7" fill="none" stroke="#848484" stroke-width="1.2"/><path d="M1227.9,425.5L1231.3,422.7V428.3Z" fill="#848484"/><text x="1313.50" y="428.70" font-family="Liberation Serif, serif" font-size="16" font-weight="normal" textLength="16.00" lengthAdjust="spacing" fill="#cc1414">49</text><text x="1329.50" y="428.70" font-family="Liberation Mono, monospace" font-size="16" font-weight="normal" textLength="8.00" lengthAdjust="spacingAndGlyphs" fill="#cc1414" xml:space="preserve">.</text><text x="1337.50" y="428.70" font-family="Liberation Serif, serif" font-size="16" font-weight="normal" textLength="8.00" lengthAdjust="spacing" fill="#cc1414">4</text><path d="M1352.5,421.3V425.5H1347.5" fill="none" stroke="#848484" stroke-width="1.2"/><path d="M1345.7,425.5L1349.1,422.7V428.3Z" fill="#848484"/><text x="955.95" y="449.75" font-family="Liberation Mono, monospace" font-size="16" font-weight="normal" textLength="8.00" lengthAdjust="spacingAndGlyphs" fill="#cc1414" xml:space="preserve">L</text><text x="963.95" y="449.75" font-family="Liberation Serif, serif" font-size="16" font-weight="normal" textLength="16.00" lengthAdjust="spacing" fill="#cc1414">14</text><path d="M987.0,442.4V446.6H982.0" fill="none" stroke="#848484" stroke-width="1.2"/><path d="M980.2,446.6L983.6,443.8V449.4Z" fill="#848484"/><text x="1076.20" y="449.75" font-family="Liberation Serif, serif" font-size="16" font-weight="normal" textLength="8.00" lengthAdjust="spacing" fill="#cc1414">4</text><text x="1084.20" y="449.75" font-family="Liberation Mono, monospace" font-size="16" font-weight="normal" textLength="8.00" lengthAdjust="spacingAndGlyphs" fill="#cc1414" xml:space="preserve">.</text><text x="1092.20" y="449.75" font-family="Liberation Serif, serif" font-size="16" font-weight="normal" textLength="8.00" lengthAdjust="spacing" fill="#cc1414">3</text><text x="1100.20" y="449.75" font-family="Liberation Mono, monospace" font-size="16" font-weight="normal" textLength="8.00" lengthAdjust="spacingAndGlyphs" fill="#cc1414" xml:space="preserve">/</text><text x="1108.20" y="449.75" font-family="Liberation Serif, serif" font-size="16" font-weight="normal" textLength="8.00" lengthAdjust="spacing" fill="#cc1414">9</text><text x="1116.20" y="449.75" font-family="Liberation Mono, monospace" font-size="16" font-weight="normal" textLength="8.00" lengthAdjust="spacingAndGlyphs" fill="#cc1414" xml:space="preserve">.</text><text x="1124.20" y="449.75" font-family="Liberation Serif, serif" font-size="16" font-weight="normal" textLength="8.00" lengthAdjust="spacing" fill="#cc1414">2</text><text x="1140.20" y="449.75" font-family="Liberation Mono, monospace" font-size="16" font-weight="normal" textLength="24.00" lengthAdjust="spacingAndGlyphs" fill="#cc1414" xml:space="preserve">mil</text><path d="M1173.7,442.4V446.6H1168.7" fill="none" stroke="#848484" stroke-width="1.2"/><path d="M1166.9,446.6L1170.3,443.8V449.4Z" fill="#848484"/><text x="1313.50" y="449.75" font-family="Liberation Serif, serif" font-size="16" font-weight="normal" textLength="16.00" lengthAdjust="spacing" fill="#cc1414">98</text><text x="1329.50" y="449.75" font-family="Liberation Mono, monospace" font-size="16" font-weight="normal" textLength="8.00" lengthAdjust="spacingAndGlyphs" fill="#cc1414" xml:space="preserve">.</text><text x="1337.50" y="449.75" font-family="Liberation Serif, serif" font-size="16" font-weight="normal" textLength="8.00" lengthAdjust="spacing" fill="#cc1414">4</text><path d="M1352.5,442.4V446.6H1347.5" fill="none" stroke="#848484" stroke-width="1.2"/><path d="M1345.7,446.6L1349.1,443.8V449.4Z" fill="#848484"/><text x="947.95" y="470.80" font-family="Liberation Mono, monospace" font-size="16" font-weight="normal" textLength="8.00" lengthAdjust="spacingAndGlyphs" fill="#cc1414" xml:space="preserve">L</text><text x="955.95" y="470.80" font-family="Liberation Serif, serif" font-size="16" font-weight="normal" textLength="8.00" lengthAdjust="spacing" fill="#cc1414">5</text><text x="963.95" y="470.80" font-family="Liberation Mono, monospace" font-size="16" font-weight="normal" textLength="8.00" lengthAdjust="spacingAndGlyphs" fill="#cc1414" xml:space="preserve">/</text><text x="971.95" y="470.80" font-family="Liberation Serif, serif" font-size="16" font-weight="normal" textLength="16.00" lengthAdjust="spacing" fill="#cc1414">12</text><path d="M995.0,463.4V467.6H990.0" fill="none" stroke="#848484" stroke-width="1.2"/><path d="M988.2,467.6L991.6,464.8V470.4Z" fill="#848484"/><text x="1108.20" y="470.80" font-family="Liberation Serif, serif" font-size="16" font-weight="normal" textLength="8.00" lengthAdjust="spacing" fill="#cc1414">4</text><text x="1116.20" y="470.80" font-family="Liberation Mono, monospace" font-size="16" font-weight="normal" textLength="8.00" lengthAdjust="spacingAndGlyphs" fill="#cc1414" xml:space="preserve">.</text><text x="1124.20" y="470.80" font-family="Liberation Serif, serif" font-size="16" font-weight="normal" textLength="8.00" lengthAdjust="spacing" fill="#cc1414">8</text><text x="1140.20" y="470.80" font-family="Liberation Mono, monospace" font-size="16" font-weight="normal" textLength="24.00" lengthAdjust="spacingAndGlyphs" fill="#cc1414" xml:space="preserve">mil</text><text x="1166.2" y="470.8" font-family="Liberation Serif, serif" font-size="15" fill="#cc1414" xml:space="preserve" textLength="61" lengthAdjust="spacingAndGlyphs">to  4.6 mil</text><path d="M1234.7,463.4V467.6H1229.7" fill="none" stroke="#848484" stroke-width="1.2"/><path d="M1227.9,467.6L1231.3,464.8V470.4Z" fill="#848484"/><text x="1313.50" y="470.80" font-family="Liberation Serif, serif" font-size="16" font-weight="normal" textLength="16.00" lengthAdjust="spacing" fill="#cc1414">49</text><text x="1329.50" y="470.80" font-family="Liberation Mono, monospace" font-size="16" font-weight="normal" textLength="8.00" lengthAdjust="spacingAndGlyphs" fill="#cc1414" xml:space="preserve">.</text><text x="1337.50" y="470.80" font-family="Liberation Serif, serif" font-size="16" font-weight="normal" textLength="8.00" lengthAdjust="spacing" fill="#cc1414">6</text><path d="M1352.5,463.4V467.6H1347.5" fill="none" stroke="#848484" stroke-width="1.2"/><path d="M1345.7,467.6L1349.1,464.8V470.4Z" fill="#848484"/><text x="947.95" y="491.85" font-family="Liberation Mono, monospace" font-size="16" font-weight="normal" textLength="8.00" lengthAdjust="spacingAndGlyphs" fill="#cc1414" xml:space="preserve">L</text><text x="955.95" y="491.85" font-family="Liberation Serif, serif" font-size="16" font-weight="normal" textLength="8.00" lengthAdjust="spacing" fill="#cc1414">5</text><text x="963.95" y="491.85" font-family="Liberation Mono, monospace" font-size="16" font-weight="normal" textLength="8.00" lengthAdjust="spacingAndGlyphs" fill="#cc1414" xml:space="preserve">/</text><text x="971.95" y="491.85" font-family="Liberation Serif, serif" font-size="16" font-weight="normal" textLength="16.00" lengthAdjust="spacing" fill="#cc1414">12</text><path d="M995.0,484.5V488.7H990.0" fill="none" stroke="#848484" stroke-width="1.2"/><path d="M988.2,488.7L991.6,485.9V491.5Z" fill="#848484"/><text x="1092.20" y="491.85" font-family="Liberation Serif, serif" font-size="16" font-weight="normal" textLength="8.00" lengthAdjust="spacing" fill="#cc1414">4</text><text x="1100.20" y="491.85" font-family="Liberation Mono, monospace" font-size="16" font-weight="normal" textLength="8.00" lengthAdjust="spacingAndGlyphs" fill="#cc1414" xml:space="preserve">.</text><text x="1108.20" y="491.85" font-family="Liberation Serif, serif" font-size="16" font-weight="normal" textLength="8.00" lengthAdjust="spacing" fill="#cc1414">5</text><text x="1116.20" y="491.85" font-family="Liberation Mono, monospace" font-size="16" font-weight="normal" textLength="8.00" lengthAdjust="spacingAndGlyphs" fill="#cc1414" xml:space="preserve">/</text><text x="1124.20" y="491.85" font-family="Liberation Serif, serif" font-size="16" font-weight="normal" textLength="8.00" lengthAdjust="spacing" fill="#cc1414">9</text><text x="1140.20" y="491.85" font-family="Liberation Mono, monospace" font-size="16" font-weight="normal" textLength="24.00" lengthAdjust="spacingAndGlyphs" fill="#cc1414" xml:space="preserve">mil</text><text x="1166.2" y="491.9" font-family="Liberation Serif, serif" font-size="15" fill="#cc1414" xml:space="preserve" textLength="85" lengthAdjust="spacingAndGlyphs">to  4.3/9.2 mil</text><path d="M1258.7,484.5V488.7H1253.7" fill="none" stroke="#848484" stroke-width="1.2"/><path d="M1251.9,488.7L1255.3,485.9V491.5Z" fill="#848484"/><text x="1313.50" y="491.85" font-family="Liberation Serif, serif" font-size="16" font-weight="normal" textLength="16.00" lengthAdjust="spacing" fill="#cc1414">98</text><text x="1329.50" y="491.85" font-family="Liberation Mono, monospace" font-size="16" font-weight="normal" textLength="8.00" lengthAdjust="spacingAndGlyphs" fill="#cc1414" xml:space="preserve">.</text><text x="1337.50" y="491.85" font-family="Liberation Serif, serif" font-size="16" font-weight="normal" textLength="8.00" lengthAdjust="spacing" fill="#cc1414">9</text><path d="M1352.5,484.5V488.7H1347.5" fill="none" stroke="#848484" stroke-width="1.2"/><path d="M1345.7,488.7L1349.1,485.9V491.5Z" fill="#848484"/><text x="955.95" y="512.90" font-family="Liberation Mono, monospace" font-size="16" font-weight="normal" textLength="8.00" lengthAdjust="spacingAndGlyphs" fill="#cc1414" xml:space="preserve">L</text><text x="963.95" y="512.90" font-family="Liberation Serif, serif" font-size="16" font-weight="normal" textLength="16.00" lengthAdjust="spacing" fill="#cc1414">10</text><path d="M987.0,505.5V509.7H982.0" fill="none" stroke="#848484" stroke-width="1.2"/><path d="M980.2,509.7L983.6,506.9V512.5Z" fill="#848484"/><text x="1108.20" y="512.90" font-family="Liberation Serif, serif" font-size="16" font-weight="normal" textLength="8.00" lengthAdjust="spacing" fill="#cc1414">4</text><text x="1116.20" y="512.90" font-family="Liberation Mono, monospace" font-size="16" font-weight="normal" textLength="8.00" lengthAdjust="spacingAndGlyphs" fill="#cc1414" xml:space="preserve">.</text><text x="1124.20" y="512.90" font-family="Liberation Serif, serif" font-size="16" font-weight="normal" textLength="8.00" lengthAdjust="spacing" fill="#cc1414">8</text><text x="1140.20" y="512.90" font-family="Liberation Mono, monospace" font-size="16" font-weight="normal" textLength="24.00" lengthAdjust="spacingAndGlyphs" fill="#cc1414" xml:space="preserve">mil</text><path d="M1173.7,505.5V509.7H1168.7" fill="none" stroke="#848484" stroke-width="1.2"/><path d="M1166.9,509.7L1170.3,506.9V512.5Z" fill="#848484"/><text x="1313.50" y="512.90" font-family="Liberation Serif, serif" font-size="16" font-weight="normal" textLength="16.00" lengthAdjust="spacing" fill="#000">49</text><text x="1329.50" y="512.90" font-family="Liberation Mono, monospace" font-size="16" font-weight="normal" textLength="8.00" lengthAdjust="spacingAndGlyphs" fill="#000" xml:space="preserve">.</text><text x="1337.50" y="512.90" font-family="Liberation Serif, serif" font-size="16" font-weight="normal" textLength="8.00" lengthAdjust="spacing" fill="#000">5</text><path d="M1352.5,505.5V509.7H1347.5" fill="none" stroke="#848484" stroke-width="1.2"/><path d="M1345.7,509.7L1349.1,506.9V512.5Z" fill="#848484"/><text x="955.95" y="533.95" font-family="Liberation Mono, monospace" font-size="16" font-weight="normal" textLength="8.00" lengthAdjust="spacingAndGlyphs" fill="#cc1414" xml:space="preserve">L</text><text x="963.95" y="533.95" font-family="Liberation Serif, serif" font-size="16" font-weight="normal" textLength="16.00" lengthAdjust="spacing" fill="#cc1414">10</text><path d="M987.0,526.5V530.7H982.0" fill="none" stroke="#848484" stroke-width="1.2"/><path d="M980.2,530.7L983.6,527.9V533.5Z" fill="#848484"/><text x="1076.20" y="533.95" font-family="Liberation Serif, serif" font-size="16" font-weight="normal" textLength="8.00" lengthAdjust="spacing" fill="#cc1414">4</text><text x="1084.20" y="533.95" font-family="Liberation Mono, monospace" font-size="16" font-weight="normal" textLength="8.00" lengthAdjust="spacingAndGlyphs" fill="#cc1414" xml:space="preserve">.</text><text x="1092.20" y="533.95" font-family="Liberation Serif, serif" font-size="16" font-weight="normal" textLength="8.00" lengthAdjust="spacing" fill="#cc1414">4</text><text x="1100.20" y="533.95" font-family="Liberation Mono, monospace" font-size="16" font-weight="normal" textLength="8.00" lengthAdjust="spacingAndGlyphs" fill="#cc1414" xml:space="preserve">/</text><text x="1108.20" y="533.95" font-family="Liberation Serif, serif" font-size="16" font-weight="normal" textLength="8.00" lengthAdjust="spacing" fill="#cc1414">9</text><text x="1116.20" y="533.95" font-family="Liberation Mono, monospace" font-size="16" font-weight="normal" textLength="8.00" lengthAdjust="spacingAndGlyphs" fill="#cc1414" xml:space="preserve">.</text><text x="1124.20" y="533.95" font-family="Liberation Serif, serif" font-size="16" font-weight="normal" textLength="8.00" lengthAdjust="spacing" fill="#cc1414">1</text><text x="1140.20" y="533.95" font-family="Liberation Mono, monospace" font-size="16" font-weight="normal" textLength="24.00" lengthAdjust="spacingAndGlyphs" fill="#cc1414" xml:space="preserve">mil</text><path d="M1173.7,526.5V530.7H1168.7" fill="none" stroke="#848484" stroke-width="1.2"/><path d="M1166.9,530.7L1170.3,527.9V533.5Z" fill="#848484"/><text x="1313.50" y="533.95" font-family="Liberation Serif, serif" font-size="16" font-weight="normal" textLength="16.00" lengthAdjust="spacing" fill="#000">98</text><text x="1329.50" y="533.95" font-family="Liberation Mono, monospace" font-size="16" font-weight="normal" textLength="8.00" lengthAdjust="spacingAndGlyphs" fill="#000" xml:space="preserve">.</text><text x="1337.50" y="533.95" font-family="Liberation Serif, serif" font-size="16" font-weight="normal" textLength="8.00" lengthAdjust="spacing" fill="#000">6</text><path d="M1352.5,526.5V530.7H1347.5" fill="none" stroke="#848484" stroke-width="1.2"/><path d="M1345.7,530.7L1349.1,527.9V533.5Z" fill="#848484"/><text x="959.95" y="555.00" font-family="Liberation Mono, monospace" font-size="16" font-weight="normal" textLength="8.00" lengthAdjust="spacingAndGlyphs" fill="#000" xml:space="preserve">L</text><text x="967.95" y="555.00" font-family="Liberation Serif, serif" font-size="16" font-weight="normal" textLength="8.00" lengthAdjust="spacing" fill="#000">6</text><path d="M983.0,547.6V551.8H978.0" fill="none" stroke="#848484" stroke-width="1.2"/><path d="M976.2,551.8L979.6,549.0V554.6Z" fill="#848484"/><text x="1116.20" y="555.00" font-family="Liberation Serif, serif" font-size="16" font-weight="normal" textLength="16.00" lengthAdjust="spacing" fill="#000">11</text><text x="1140.20" y="555.00" font-family="Liberation Mono, monospace" font-size="16" font-weight="normal" textLength="24.00" lengthAdjust="spacingAndGlyphs" fill="#000" xml:space="preserve">mil</text><text x="1166.2" y="555.0" font-family="Liberation Serif, serif" font-size="15" fill="#000" xml:space="preserve" textLength="68" lengthAdjust="spacingAndGlyphs">to  10.5 mil</text><path d="M1241.7,547.6V551.8H1236.7" fill="none" stroke="#848484" stroke-width="1.2"/><path d="M1234.9,551.8L1238.3,549.0V554.6Z" fill="#848484"/><text x="1313.50" y="555.00" font-family="Liberation Serif, serif" font-size="16" font-weight="normal" textLength="16.00" lengthAdjust="spacing" fill="#000">49</text><text x="1329.50" y="555.00" font-family="Liberation Mono, monospace" font-size="16" font-weight="normal" textLength="8.00" lengthAdjust="spacingAndGlyphs" fill="#000" xml:space="preserve">.</text><text x="1337.50" y="555.00" font-family="Liberation Serif, serif" font-size="16" font-weight="normal" textLength="8.00" lengthAdjust="spacing" fill="#000">6</text><path d="M1352.5,547.6V551.8H1347.5" fill="none" stroke="#848484" stroke-width="1.2"/><path d="M1345.7,551.8L1349.1,549.0V554.6Z" fill="#848484"/><text x="1380.12 1396.12" y="555.30" font-family="'Liberation Sans','Noto Sans CJK SC',sans-serif" font-size="16.96" font-weight="bold" fill="#0000e6">屏蔽</text><rect x="1413.6" y="553.5" width="2.5" height="3" fill="#0000e6"/><text x="959.95" y="576.05" font-family="Liberation Mono, monospace" font-size="16" font-weight="normal" textLength="8.00" lengthAdjust="spacingAndGlyphs" fill="#000" xml:space="preserve">L</text><text x="967.95" y="576.05" font-family="Liberation Serif, serif" font-size="16" font-weight="normal" textLength="8.00" lengthAdjust="spacing" fill="#000">6</text><path d="M983.0,568.7V572.9H978.0" fill="none" stroke="#848484" stroke-width="1.2"/><path d="M976.2,572.9L979.6,570.1V575.7Z" fill="#848484"/><text x="1100.20" y="576.05" font-family="Liberation Serif, serif" font-size="16" font-weight="normal" textLength="8.00" lengthAdjust="spacing" fill="#000">8</text><text x="1108.20" y="576.05" font-family="Liberation Mono, monospace" font-size="16" font-weight="normal" textLength="8.00" lengthAdjust="spacingAndGlyphs" fill="#000" xml:space="preserve">/</text><text x="1116.20" y="576.05" font-family="Liberation Serif, serif" font-size="16" font-weight="normal" textLength="16.00" lengthAdjust="spacing" fill="#000">10</text><text x="1140.20" y="576.05" font-family="Liberation Mono, monospace" font-size="16" font-weight="normal" textLength="24.00" lengthAdjust="spacingAndGlyphs" fill="#000" xml:space="preserve">mil</text><text x="1166.2" y="576.1" font-family="Liberation Serif, serif" font-size="15" fill="#000" xml:space="preserve" textLength="92" lengthAdjust="spacingAndGlyphs">to  7.6/10.4 mil</text><path d="M1265.7,568.7V572.9H1260.7" fill="none" stroke="#848484" stroke-width="1.2"/><path d="M1258.9,572.9L1262.3,570.1V575.7Z" fill="#848484"/><text x="1313.50" y="576.05" font-family="Liberation Serif, serif" font-size="16" font-weight="normal" textLength="16.00" lengthAdjust="spacing" fill="#000">99</text><text x="1329.50" y="576.05" font-family="Liberation Mono, monospace" font-size="16" font-weight="normal" textLength="8.00" lengthAdjust="spacingAndGlyphs" fill="#000" xml:space="preserve">.</text><text x="1337.50" y="576.05" font-family="Liberation Serif, serif" font-size="16" font-weight="normal" textLength="8.00" lengthAdjust="spacing" fill="#000">6</text><path d="M1352.5,568.7V572.9H1347.5" fill="none" stroke="#848484" stroke-width="1.2"/><path d="M1345.7,572.9L1349.1,570.1V575.7Z" fill="#848484"/><text x="1380.12 1396.12" y="576.35" font-family="'Liberation Sans','Noto Sans CJK SC',sans-serif" font-size="16.96" font-weight="bold" fill="#0000e6">屏蔽</text><rect x="1413.6" y="574.6" width="2.5" height="3" fill="#0000e6"/><rect x="934.6" y="581.1" width="441.30000000000007" height="20.7" fill="#000"/><path d="M1001.3,580.7V601.7" stroke="#a8a8a8" stroke-width="1.1"/><path d="M1280.2,580.7V601.7" stroke="#a8a8a8" stroke-width="1.1"/><path d="M1165.2,580.7V601.7" stroke="#a8a8a8" stroke-width="1.1"/><text x="959.95" y="597.10" font-family="Liberation Mono, monospace" font-size="16" font-weight="normal" textLength="8.00" lengthAdjust="spacingAndGlyphs" fill="#33e6e6" xml:space="preserve">L</text><text x="967.95" y="597.10" font-family="Liberation Serif, serif" font-size="16" font-weight="normal" textLength="8.00" lengthAdjust="spacing" fill="#33e6e6">5</text><path d="M983.0,589.7V593.9H978.0" fill="none" stroke="#848484" stroke-width="1.2"/><path d="M976.2,593.9L979.6,591.1V596.7Z" fill="#848484"/><text x="1100.20" y="597.10" font-family="Liberation Serif, serif" font-size="16" font-weight="normal" textLength="8.00" lengthAdjust="spacing" fill="#33e6e6">8</text><text x="1108.20" y="597.10" font-family="Liberation Mono, monospace" font-size="16" font-weight="normal" textLength="8.00" lengthAdjust="spacingAndGlyphs" fill="#33e6e6" xml:space="preserve">/</text><text x="1116.20" y="597.10" font-family="Liberation Serif, serif" font-size="16" font-weight="normal" textLength="16.00" lengthAdjust="spacing" fill="#33e6e6">10</text><text x="1140.20" y="597.10" font-family="Liberation Mono, monospace" font-size="16" font-weight="normal" textLength="24.00" lengthAdjust="spacingAndGlyphs" fill="#33e6e6" xml:space="preserve">mil</text><path d="M1173.7,589.7V593.9H1168.7" fill="none" stroke="#848484" stroke-width="1.2"/><path d="M1166.9,593.9L1170.3,591.1V596.7Z" fill="#848484"/><text x="1309.50" y="597.10" font-family="Liberation Serif, serif" font-size="16" font-weight="normal" textLength="24.00" lengthAdjust="spacing" fill="#33e6e6">100</text><text x="1333.50" y="597.10" font-family="Liberation Mono, monospace" font-size="16" font-weight="normal" textLength="8.00" lengthAdjust="spacingAndGlyphs" fill="#33e6e6" xml:space="preserve">.</text><text x="1341.50" y="597.10" font-family="Liberation Serif, serif" font-size="16" font-weight="normal" textLength="8.00" lengthAdjust="spacing" fill="#33e6e6">7</text><path d="M1356.5,589.7V593.9H1351.5" fill="none" stroke="#848484" stroke-width="1.2"/><path d="M1349.7,593.9L1353.1,591.1V596.7Z" fill="#848484"/><text x="1380.12 1396.12" y="597.40" font-family="'Liberation Sans','Noto Sans CJK SC',sans-serif" font-size="16.96" font-weight="bold" fill="#0000e6">屏蔽</text><rect x="1413.6" y="595.6" width="2.5" height="3" fill="#0000e6"/><text x="959.95" y="617.20" font-family="Liberation Mono, monospace" font-size="16" font-weight="normal" textLength="8.00" lengthAdjust="spacingAndGlyphs" fill="#000" xml:space="preserve">L</text><text x="967.95" y="617.20" font-family="Liberation Serif, serif" font-size="16" font-weight="normal" textLength="8.00" lengthAdjust="spacing" fill="#000">1</text><path d="M983.0,609.8V614.0H978.0" fill="none" stroke="#848484" stroke-width="1.2"/><path d="M976.2,614.0L979.6,611.2V616.8Z" fill="#848484"/><text x="1001.82 1017.82 1033.82 1049.82 1065.82" y="617.20" font-family="'Liberation Sans','Noto Sans CJK SC',sans-serif" font-size="16.96" fill="#000">的屏蔽层为</text><rect x="1084.3" y="609.7" width="1.6" height="1.8" fill="#000"/><rect x="1084.3" y="615.4" width="1.6" height="1.8" fill="#000"/><path d="M1097.3,609.8V614.0H1092.3" fill="none" stroke="#848484" stroke-width="1.2"/><path d="M1090.5,614.0L1093.9,611.2V616.8Z" fill="#848484"/><text x="1166.20" y="617.20" font-family="Liberation Mono, monospace" font-size="16" font-weight="normal" textLength="8.00" lengthAdjust="spacingAndGlyphs" fill="#000" xml:space="preserve">L</text><text x="1174.20" y="617.20" font-family="Liberation Serif, serif" font-size="16" font-weight="normal" textLength="8.00" lengthAdjust="spacing" fill="#000">2</text><path d="M1189.2,609.8V614.0H1184.2" fill="none" stroke="#848484" stroke-width="1.2"/><path d="M1182.4,614.0L1185.8,611.2V616.8Z" fill="#848484"/><path d="M1335.3,609.8V614.0H1330.3" fill="none" stroke="#848484" stroke-width="1.2"/><path d="M1328.5,614.0L1331.9,611.2V616.8Z" fill="#848484"/><text x="955.95" y="637.30" font-family="Liberation Mono, monospace" font-size="16" font-weight="normal" textLength="8.00" lengthAdjust="spacingAndGlyphs" fill="#000" xml:space="preserve">L</text><text x="963.95" y="637.30" font-family="Liberation Serif, serif" font-size="16" font-weight="normal" textLength="16.00" lengthAdjust="spacing" fill="#000">16</text><path d="M987.0,629.9V634.1H982.0" fill="none" stroke="#848484" stroke-width="1.2"/><path d="M980.2,634.1L983.6,631.3V636.9Z" fill="#848484"/><text x="1001.82 1017.82 1033.82 1049.82 1065.82" y="637.30" font-family="'Liberation Sans','Noto Sans CJK SC',sans-serif" font-size="16.96" fill="#000">的屏蔽层为</text><rect x="1084.3" y="629.8" width="1.6" height="1.8" fill="#000"/><rect x="1084.3" y="635.5" width="1.6" height="1.8" fill="#000"/><path d="M1097.3,629.9V634.1H1092.3" fill="none" stroke="#848484" stroke-width="1.2"/><path d="M1090.5,634.1L1093.9,631.3V636.9Z" fill="#848484"/><text x="1166.20" y="637.30" font-family="Liberation Mono, monospace" font-size="16" font-weight="normal" textLength="8.00" lengthAdjust="spacingAndGlyphs" fill="#000" xml:space="preserve">L</text><text x="1174.20" y="637.30" font-family="Liberation Serif, serif" font-size="16" font-weight="normal" textLength="16.00" lengthAdjust="spacing" fill="#000">15</text><path d="M1197.2,629.9V634.1H1192.2" fill="none" stroke="#848484" stroke-width="1.2"/><path d="M1190.4,634.1L1193.8,631.3V636.9Z" fill="#848484"/><path d="M1335.3,629.9V634.1H1330.3" fill="none" stroke="#848484" stroke-width="1.2"/><path d="M1328.5,634.1L1331.9,631.3V636.9Z" fill="#848484"/><text x="959.95" y="657.40" font-family="Liberation Mono, monospace" font-size="16" font-weight="normal" textLength="8.00" lengthAdjust="spacingAndGlyphs" fill="#000" xml:space="preserve">L</text><text x="967.95" y="657.40" font-family="Liberation Serif, serif" font-size="16" font-weight="normal" textLength="8.00" lengthAdjust="spacing" fill="#000">1</text><path d="M983.0,650.0V654.2H978.0" fill="none" stroke="#848484" stroke-width="1.2"/><path d="M976.2,654.2L979.6,651.4V657.0Z" fill="#848484"/><text x="1001.82 1017.82 1033.82 1049.82 1065.82" y="657.40" font-family="'Liberation Sans','Noto Sans CJK SC',sans-serif" font-size="16.96" fill="#000">的屏蔽层为</text><rect x="1084.3" y="649.9" width="1.6" height="1.8" fill="#000"/><rect x="1084.3" y="655.6" width="1.6" height="1.8" fill="#000"/><path d="M1097.3,650.0V654.2H1092.3" fill="none" stroke="#848484" stroke-width="1.2"/><path d="M1090.5,654.2L1093.9,651.4V657.0Z" fill="#848484"/><text x="1166.20" y="657.40" font-family="Liberation Mono, monospace" font-size="16" font-weight="normal" textLength="8.00" lengthAdjust="spacingAndGlyphs" fill="#000" xml:space="preserve">L</text><text x="1174.20" y="657.40" font-family="Liberation Serif, serif" font-size="16" font-weight="normal" textLength="8.00" lengthAdjust="spacing" fill="#000">3</text><path d="M1189.2,650.0V654.2H1184.2" fill="none" stroke="#848484" stroke-width="1.2"/><path d="M1182.4,654.2L1185.8,651.4V657.0Z" fill="#848484"/><path d="M1335.3,650.0V654.2H1330.3" fill="none" stroke="#848484" stroke-width="1.2"/><path d="M1328.5,654.2L1331.9,651.4V657.0Z" fill="#848484"/><text x="959.95" y="677.50" font-family="Liberation Mono, monospace" font-size="16" font-weight="normal" textLength="8.00" lengthAdjust="spacingAndGlyphs" fill="#000" xml:space="preserve">L</text><text x="967.95" y="677.50" font-family="Liberation Serif, serif" font-size="16" font-weight="normal" textLength="8.00" lengthAdjust="spacing" fill="#000">3</text><path d="M983.0,670.1V674.3H978.0" fill="none" stroke="#848484" stroke-width="1.2"/><path d="M976.2,674.3L979.6,671.5V677.1Z" fill="#848484"/><text x="1001.82 1017.82 1033.82 1049.82 1065.82" y="677.50" font-family="'Liberation Sans','Noto Sans CJK SC',sans-serif" font-size="16.96" fill="#000">的屏蔽层为</text><rect x="1084.3" y="670.0" width="1.6" height="1.8" fill="#000"/><rect x="1084.3" y="675.7" width="1.6" height="1.8" fill="#000"/><path d="M1097.3,670.1V674.3H1092.3" fill="none" stroke="#848484" stroke-width="1.2"/><path d="M1090.5,674.3L1093.9,671.5V677.1Z" fill="#848484"/><text x="1166.20" y="677.50" font-family="Liberation Mono, monospace" font-size="16" font-weight="normal" textLength="8.00" lengthAdjust="spacingAndGlyphs" fill="#000" xml:space="preserve">L</text><text x="1174.20" y="677.50" font-family="Liberation Serif, serif" font-size="16" font-weight="normal" textLength="8.00" lengthAdjust="spacing" fill="#000">2</text><text x="1182.20" y="677.50" font-family="Liberation Mono, monospace" font-size="16" font-weight="normal" textLength="16.00" lengthAdjust="spacingAndGlyphs" fill="#000" xml:space="preserve">/L</text><text x="1198.20" y="677.50" font-family="Liberation Serif, serif" font-size="16" font-weight="normal" textLength="8.00" lengthAdjust="spacing" fill="#000">4</text><path d="M1213.2,670.1V674.3H1208.2" fill="none" stroke="#848484" stroke-width="1.2"/><path d="M1206.4,674.3L1209.8,671.5V677.1Z" fill="#848484"/><path d="M1335.3,670.1V674.3H1330.3" fill="none" stroke="#848484" stroke-width="1.2"/><path d="M1328.5,674.3L1331.9,671.5V677.1Z" fill="#848484"/></svg></div>
<div style="left:851px;top:677px;width:600px;height:16px;background:#d4d0c8;"></div>
<div style="left:949px;top:677px;width:500px;height:15.5px;background:#d6d2ca;border-top:1px solid #fff;border-left:1px solid #fff;border-bottom:1.500px solid #5a5a5a"></div>
<div style="left:933px;top:677px;width:16px;height:16px;background:#d4d0c8;border:1px solid #fff;border-right-color:#404040;border-bottom-color:#404040"></div>
<div style="left:849px;top:693px;width:600px;height:1px;background:#fff;"></div>
<svg style="left:0;top:0" width="1416" height="700"><path d="M855,681.5h8M855,683.5h8M855,685.5h8M855,687.5h8" stroke="#000"/><rect x="867.5" y="677.5" width="15" height="15" fill="#c6d2ea" stroke="#0a246a"/><rect x="871" y="680.5" width="8" height="8" fill="#fff" stroke="#000"/><circle cx="877" cy="687" r="2" fill="#223a8a"/><rect x="888.5" y="680.5" width="7" height="8" fill="#fff" stroke="#000"/><path d="M890,684.5h4" stroke="#000"/><path d="M904,681.5h2M908,681.5h5M906,684.5h2M910,684.5h4M904,687.5h2M908,687.5h5" stroke="#000"/><path d="M919.5,681l4,1.5 4,-1.5v7.5l-4,1.5 -4,-1.5zM923.5,682.5v7.5" fill="#fff" stroke="#000"/><path d="M943,681l-4,4 4,4z" fill="#000"/></svg>
<div style="left:851px;top:695px;width:600px;height:27px;background:linear-gradient(180deg,#f6f5f1 0%,#eceae4 40%,#d6d2ca 100%);border-radius:4px 0 0 4px"></div>
<div style="left:855px;top:700px;width:2px;height:2px;background:#8a8780;"></div>
<div style="left:856px;top:701px;width:1px;height:1px;background:#fff;"></div>
<div style="left:855px;top:704px;width:2px;height:2px;background:#8a8780;"></div>
<div style="left:856px;top:705px;width:1px;height:1px;background:#fff;"></div>
<div style="left:855px;top:708px;width:2px;height:2px;background:#8a8780;"></div>
<div style="left:856px;top:709px;width:1px;height:1px;background:#fff;"></div>
<div style="left:855px;top:712px;width:2px;height:2px;background:#8a8780;"></div>
<div style="left:856px;top:713px;width:1px;height:1px;background:#fff;"></div>
<div style="left:855px;top:716px;width:2px;height:2px;background:#8a8780;"></div>
<div style="left:856px;top:717px;width:1px;height:1px;background:#fff;"></div>
<svg style="left:0;top:0" width="1416" height="730"><text x="861.20 873.20" y="713.00" font-family="'Liberation Sans','Noto Sans CJK SC',sans-serif" font-size="12.6" fill="#000">绘图</text><text x="887.5" y="712.6" font-family="Liberation Mono, monospace" font-size="11" fill="#000" textLength="17" lengthAdjust="spacingAndGlyphs">(D)</text><path d="M893.5,715h6" stroke="#000"/><path d="M907,706.5h5l-2.5,3z" fill="#000"/><path d="M923.5,701v11.5l2.8,-2.6 2,4.4 1.8,-0.9 -2,-4.2h3.6z" fill="#fff" stroke="#5a78b8" stroke-width="0.9"/><path d="M942.5,701v19" stroke="#a6a29a"/><path d="M943.5,701v19" stroke="#fbfaf8"/><text x="949.70 961.70 973.70 985.70" y="713.00" font-family="'Liberation Sans','Noto Sans CJK SC',sans-serif" font-size="12.6" fill="#000">自选图形</text><text x="1000.0" y="712.6" font-family="Liberation Mono, monospace" font-size="11" fill="#000" textLength="17" lengthAdjust="spacingAndGlyphs">(U)</text><path d="M1006.0,715h6" stroke="#000"/><path d="M1018,706.5h5l-2.5,3z" fill="#000"/><path d="M1033,702l11,10.5" stroke="#000" stroke-width="1.1"/><path d="M1057,702l9,9" stroke="#000" stroke-width="1.1"/><path d="M1067.5,712.5l-5.5,-1.8 3.7,-3.7z" fill="#000"/><rect x="1077.5" y="702.5" width="15" height="11" fill="#fff" stroke="#000"/><ellipse cx="1108" cy="708" rx="7.5" ry="5.5" fill="#fff" stroke="#000"/></svg>
<div style="left:849px;top:721px;width:600px;height:1px;background:#a8a49c;"></div>
<div style="left:849px;top:722px;width:600px;height:1px;background:#fff;"></div>
<div style="left:849px;top:723px;width:600px;height:1px;background:#d4d0c8;"></div>
<div style="left:849px;top:724px;width:600px;height:19px;background:#d4d0c8;"></div>
<div style="left:854px;top:725px;width:196px;height:17px;background:#d4d0c8;border:1px solid #bcb8b0;border-right-color:#f4f2ee;border-bottom-color:#f4f2ee"></div>
<div style="left:1056px;top:725px;width:228px;height:17px;background:#d4d0c8;border:1px solid #bcb8b0;border-right-color:#f4f2ee;border-bottom-color:#f4f2ee"></div>
<div style="left:1286px;top:725px;width:31px;height:17px;background:#d4d0c8;border:1px solid #bcb8b0;border-right-color:#f4f2ee;border-bottom-color:#f4f2ee"></div>
<div style="left:1321px;top:725px;width:30px;height:17px;background:#d4d0c8;border:1px solid #bcb8b0;border-right-color:#f4f2ee;border-bottom-color:#f4f2ee"></div>
<div style="left:1355px;top:725px;width:30px;height:17px;background:#d4d0c8;border:1px solid #bcb8b0;border-right-color:#f4f2ee;border-bottom-color:#f4f2ee"></div>
<div style="left:1389px;top:725px;width:30px;height:17px;background:#d4d0c8;border:1px solid #bcb8b0;border-right-color:#f4f2ee;border-bottom-color:#f4f2ee"></div>
<svg style="left:0;top:0" width="1416" height="750"><g font-family="'Liberation Sans','Noto Sans CJK SC',sans-serif" font-size="12.6" fill="#98968e"><text x="909.20" y="737.00">页</text><text x="971.70" y="737.00">节</text><text x="1059.70 1071.70" y="737.00">位置</text><text x="1219.20" y="737.00">行</text><text x="1263.20" y="737.00">列</text><text x="1288.70 1300.70" y="737.00">录制</text><text x="1323.20 1335.20" y="737.00">修订</text><text x="1357.20 1369.20" y="737.00">扩展</text><text x="1391.20 1403.20" y="737.00">改写</text></g></svg>
<svg style="left:0;top:0" width="1416" height="730"><g transform="translate(1123,700)"><rect x="0.5" y="0.5" width="14" height="13.5" fill="#fff" stroke="#4a6ab8"/><text x="1.5" y="7" font-family="Liberation Sans,sans-serif" font-size="7" font-weight="bold" fill="#000">A</text><path d="M8,3.5h5M8,6h5M2.5,9h10.5M2.5,11.5h10.5" stroke="#4a6ab8" stroke-width="0.9"/></g><g transform="translate(1146.5,700)"><rect x="0.5" y="0.5" width="14" height="13.5" fill="#fff" stroke="#4a6ab8"/><path d="M3,2.5v10M5.5,2.5v10M8,7v5.5M10.5,7v5.5" stroke="#4a6ab8" stroke-width="0.9"/><text x="7.5" y="6.5" font-family="Liberation Sans,sans-serif" font-size="6.5" font-weight="bold" fill="#000">A</text></g><text x="1170" y="714.5" font-family="Liberation Sans,sans-serif" font-style="italic" font-weight="bold" font-size="18" fill="#2a5ac8" stroke="#8ab0f0" stroke-width="0.6" transform="skewX(-8) translate(101,0)">A</text><g transform="translate(1192,700)"><circle cx="7" cy="7.5" r="5.2" fill="none" stroke="#5a7ab8" stroke-width="0.9" stroke-dasharray="2.2 1.6"/><circle cx="7" cy="1.8" r="1.7" fill="#4a8ad8"/><circle cx="12" cy="5" r="1.7" fill="#d04848"/><circle cx="10.5" cy="12" r="1.7" fill="#7a5ac8"/><circle cx="3.2" cy="12" r="1.7" fill="#4a8ad8"/><circle cx="1.8" cy="5" r="1.7" fill="#48a868"/></g><g transform="translate(1216,700)"><rect x="0.5" y="0.5" width="13.5" height="13.5" fill="#e8eef8" stroke="#4a6ab8"/><circle cx="7.2" cy="5" r="2.8" fill="#e8a868" stroke="#8a4a18" stroke-width="0.6"/><path d="M2,13.5c0.5,-4.5 10,-4.5 10.5,0z" fill="#e07820"/><path d="M4.5,4c0.5,-3 5,-3 5.5,0" fill="#5a3a18"/></g><g transform="translate(1239,700)"><rect x="0.5" y="0.5" width="13.5" height="13.5" fill="#dce8f8" stroke="#4a6ab8"/><path d="M0.8,12l4.5,-6 3,3.5 2,-2 3.5,4.5v1.5h-13z" fill="#8aa0c8"/><circle cx="10.5" cy="3.8" r="1.5" fill="#f4f4d0"/></g><path d="M1260.5,701v19" stroke="#a6a29a"/><path d="M1261.5,701v19" stroke="#fbfaf8"/><g transform="translate(1266,699)"><path d="M5,2.5l7,4.5 -5,5.5 -5.5,-4z" fill="#f4f4f8" stroke="#4a5a88" stroke-width="0.9"/><path d="M12,7c2.5,1 2.8,3 2,4.5" fill="none" stroke="#2a4ac8" stroke-width="1.3"/><path d="M3,5l4,-4.5" stroke="#6a7a98" stroke-width="1"/><rect x="0" y="12.8" width="17.5" height="4.2" fill="#fff000"/></g><path d="M1288,706.5h6l-3,3.2z" fill="#000"/><g transform="translate(1301,699)"><path d="M3,9.5c3,-1.5 6,-5 9.5,-8.5l2,1.5c-3,3.5 -6,7 -9.500,8.500z" fill="#4a7ad8" stroke="#2a4a98" stroke-width="0.7"/><path d="M1,11.500c2,-1 4,-0.500 5,0" stroke="#2a4a98" fill="none"/><rect x="0" y="12.8" width="16.5" height="4.200" fill="#0038e0"/></g><path d="M1322,706.5h6l-3,3.2z" fill="#000"/><text x="1343" y="712" text-anchor="middle" font-family="Liberation Serif,serif" font-weight="bold" font-size="17" fill="#3a5ab8">A</text><rect x="1334.5" y="711.800" width="17" height="4.2" fill="#f01010"/><path d="M1356.500,706.5h6l-3,3.2z" fill="#000"/><path d="M1369,703.500h15.500" stroke="#000" stroke-width="1.500"/><path d="M1369,707.500h15.500" stroke="#000" stroke-width="2.500"/><path d="M1369,712h15.500" stroke="#000" stroke-width="3"/><path d="M1392,703.500h15.500" stroke="#000" stroke-width="1.200" stroke-dasharray="1 1"/><path d="M1392,707h15.500" stroke="#000" stroke-width="1.200" stroke-dasharray="2 1"/><path d="M1392,710.500h15.500" stroke="#000" stroke-width="1.200" stroke-dasharray="3 1.500"/><path d="M1392,714h15.500" stroke="#000" stroke-width="1.200" stroke-dasharray="5 2"/><path d="M1414,703h3M1414,707h3M1414,711h3" stroke="#000" stroke-width="1.500"/><rect x="1128.500" y="681.500" width="215" height="22.500" rx="2.500" fill="#d6d2ca" stroke="#9a968e"/><path d="M1129.500,703v-19.500a1.500,1.500 0 0 1 1.500,-1.500h211" fill="none" stroke="#f8f7f4"/><path d="M1131.500,685v15M1133.500,685v15" stroke="#a8a49c" stroke-dasharray="1 1"/><g transform="translate(1139,685)"><rect x="4" y="2" width="10.500" height="12.500" fill="#fff" stroke="#000"/><path d="M6,5h6.500M6,7.500h6.500M6,10h6.500M6,12.500h4" stroke="#000" stroke-width="0.800" stroke-dasharray="1.500 0.700"/><path d="M0.500,5.500l3,3.500 5,-8.500" fill="none" stroke="#e01010" stroke-width="1.800"/></g><path d="M1158.500,684v17" stroke="#a6a29a"/><path d="M1159.500,684v17" stroke="#fbfaf8"/><g transform="translate(1166.5,685.5)"><rect x="0" y="0" width="16" height="15" fill="#000"/><text x="1" y="7" font-family="Liberation Sans,sans-serif" font-weight="bold" font-size="7.500" fill="#fff" textLength="14" lengthAdjust="spacingAndGlyphs">MS</text><rect x="0.800" y="8" width="7" height="6.500" fill="#f8e800"/><rect x="8.200" y="8" width="7" height="6.500" fill="#e01818"/><text x="1.500" y="14" font-family="Liberation Sans,sans-serif" font-weight="bold" font-size="7.500" fill="#000">P</text><text x="9" y="14" font-family="Liberation Sans,sans-serif" font-weight="bold" font-size="7.500" fill="#000">Y</text></g><text x="1190.00" y="693.50" font-family="'Liberation Sans','Noto Sans CJK SC',sans-serif" font-size="9" font-weight="500" fill="#a01010">体</text><text x="1196.00" y="700.50" font-family="'Liberation Sans','Noto Sans CJK SC',sans-serif" font-size="9" font-weight="500" fill="#a01010">验</text><path d="M1192,696v4.500h3M1202,686h3v4" fill="none" stroke="#a01010" stroke-width="1.100"/><text x="1210.00" y="699.50" font-family="'Liberation Sans','Noto Sans CJK SC',sans-serif" font-size="16" fill="#d01010">中</text><path d="M1241,688c3,3 1.500,7.500 -6,8c4,3.500 11.500,1.500 11.500,-3.500c0,-2.500 -2.500,-4.500 -5.500,-4.500z" fill="#f8e020" stroke="#000" stroke-width="0.900"/><circle cx="1259" cy="691" r="2" fill="none" stroke="#a01010" stroke-width="1.100"/><path d="M1265.500,694.500v2.500l-1.500,2.500" fill="none" stroke="#a01010" stroke-width="1.600"/><g transform="translate(1276,686)"><rect x="0.500" y="0.500" width="11" height="12.500" fill="#fff" stroke="#1a2a6a"/><rect x="0.500" y="0.500" width="11" height="3" fill="#2a4ab8"/><path d="M2,6h8M2,8.500h8M2,11h8" stroke="#1a2a6a" stroke-width="1.200"/><path d="M9.500,4.500v9.500l2.200,-2 1.600,3.500 1.500,-0.700 -1.600,-3.400h3z" fill="#fff" stroke="#000" stroke-width="0.800"/></g><path d="M1296.500,684v17" stroke="#a6a29a"/><path d="M1297.500,684v17" stroke="#fbfaf8"/><g transform="translate(1305.5,686.5)"><path d="M1,0.500h11.500a1,1 0 0 1 1,1v8.500a1,1 0 0 1 -1,1h-3l-2.500,2.500v-2.500h-6a1,1 0 0 1 -1,-1v-8.500a1,1 0 0 1 1,-1z" fill="#ffffd8" stroke="#000" stroke-width="1.100"/><text x="6.800" y="9.300" text-anchor="middle" font-family="Liberation Sans,sans-serif" font-weight="bold" font-size="10" fill="#000">?</text></g><path d="M1324.500,684v17" stroke="#a6a29a"/><path d="M1325.500,684v17" stroke="#fbfaf8"/><path d="M1332.500,689h5" stroke="#000" stroke-width="1.800"/><path d="M1332,695.500h6l-3,3.200z" fill="#000"/></svg>
</div>
</body></html>
